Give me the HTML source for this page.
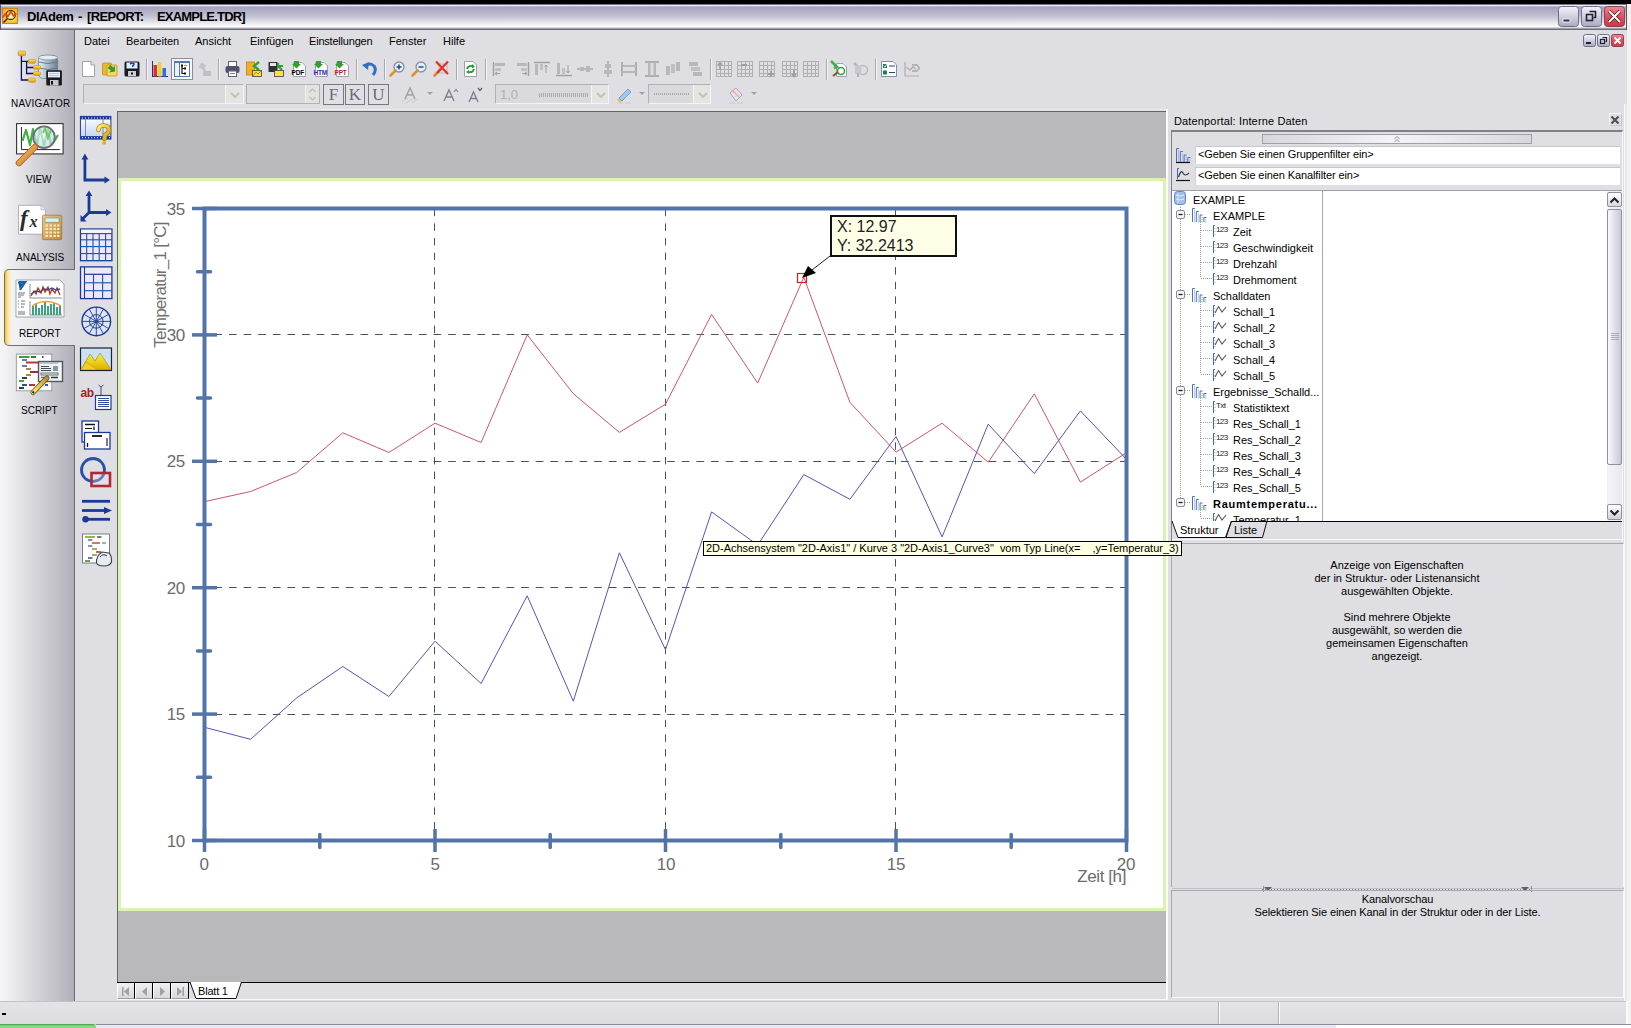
<!DOCTYPE html>
<html><head><meta charset="utf-8"><style>
*{box-sizing:border-box}
html,body{margin:0;padding:0}
body{width:1631px;height:1028px;position:relative;overflow:hidden;background:#dfdfe3;font-family:"Liberation Sans",sans-serif;font-size:11px;color:#000}
.a{position:absolute}
svg{position:absolute;overflow:visible}
#topblack{left:0;top:0;width:1631px;height:4px;background:#000}
#title{left:0;top:4px;width:1627px;height:26px;background:linear-gradient(#3a3a48 0px,#eee9ff 1.5px,#b8b4cc 2.5px,#a7a6c0 3.5px,#a9a8c2 5px,#c0c0d0 12px,#e8e8ee 19px,#f8f8fa 22px,#fff 22.5px,#d8d8dc 23.5px,#a0a0a8 24.5px,#6e6e78 25.5px);border-left:1px solid #6a4a8a;border-right:1px solid #555}
#rstrip{left:1627px;top:4px;width:4px;height:1024px;background:#f2f2f2}
#menu{left:0;top:29px;width:1627px;height:975px;background:#dfdfe3}
.mi{position:absolute;top:35px;font-size:11px;line-height:13px;white-space:nowrap}
#nav{left:0;top:30px;width:74px;height:971px;background:linear-gradient(90deg,#f6f6f8 0px,#e8e8ec 16px,#d4d3d9 37px,#c4c3ca 55px,#b2b1ba 73px);}
#navline{left:74px;top:30px;width:1px;height:971px;background:#6a6a6e}
#canvas{left:117px;top:111px;width:1049px;height:871px;background:#b9b9bb;border-left:1px solid #666;border-top:1px solid #666}
#page{left:118px;top:178px;width:1048px;height:733px;background:#fff;border:3px solid #d8f4b0}
#tabbar{left:117px;top:982px;width:1049px;height:17px;background:#dfdfe3;border-top:1px solid #000}
#status{left:0;top:1001px;width:1627px;height:23px;background:linear-gradient(#a0a0a8 0px,#e4e4e8 1px,#dcdce0 22px)}
#taskbar{left:0;top:1024px;width:1631px;height:4px;background:#e8e8f0}
</style></head>
<body>
<div id="topblack" class="a"></div>
<div id="menu" class="a"></div>
<div id="title" class="a"></div>
<div id="rstrip" class="a"></div>
<!-- title content -->
<svg class="a" style="left:2px;top:8px" width="16" height="16" viewBox="0 0 16 16">
<defs><radialGradient id="tg" cx="0.55" cy="0.5" r="0.7"><stop offset="0" stop-color="#fffce0"/><stop offset="0.5" stop-color="#f8d040"/><stop offset="1" stop-color="#f0a020"/></radialGradient></defs>
<rect x="0.5" y="0.5" width="15" height="15" fill="url(#tg)" stroke="#c88810"/>
<circle cx="8.7" cy="6.9" r="4.6" fill="none" stroke="#503010" stroke-width="1.3"/>
<path d="M0.8 9.5 L3.5 5.5 L6 8.5 L8.8 3.5 L11.5 8 L14.5 5.5" fill="none" stroke="#e04810" stroke-width="1.6" stroke-linejoin="round"/>
<path d="M5.5 10.5 L1.5 14.5" stroke="#402818" stroke-width="1.6"/>
</svg>
<div class="a" style="left:27px;top:9px;font-weight:bold;font-size:13px;line-height:16px;letter-spacing:-0.45px;white-space:nowrap">DIAdem</div>
<div class="a" style="left:78px;top:9px;font-weight:bold;font-size:13px;line-height:16px;white-space:nowrap">-</div>
<div class="a" style="left:87px;top:9px;font-weight:bold;font-size:13px;line-height:16px;letter-spacing:-0.6px;white-space:nowrap">[REPORT:</div>
<div class="a" style="left:157px;top:9px;font-weight:bold;font-size:13px;line-height:16px;letter-spacing:-0.8px;white-space:nowrap">EXAMPLE.TDR]</div>
<!-- window buttons -->
<svg class="a" style="left:1558px;top:6px" width="21" height="21" viewBox="0 0 21 21">
<defs><linearGradient id="bg1" x1="0" y1="0" x2="0" y2="1"><stop offset="0" stop-color="#f4f4fc"/><stop offset="0.5" stop-color="#d0d0e0"/><stop offset="1" stop-color="#a8a8c0"/></linearGradient>
<linearGradient id="bg2" x1="0" y1="0" x2="0" y2="1"><stop offset="0" stop-color="#f08890"/><stop offset="0.5" stop-color="#e05060"/><stop offset="1" stop-color="#c83848"/></linearGradient></defs>
<rect x="0.5" y="0.5" width="20" height="20" rx="3" fill="url(#bg1)" stroke="#707088"/>
<rect x="5" y="13" width="7" height="3" fill="#383850" stroke="#fff" stroke-width="0.8"/>
</svg>
<svg class="a" style="left:1581px;top:6px" width="21" height="21" viewBox="0 0 21 21">
<rect x="0.5" y="0.5" width="20" height="20" rx="3" fill="url(#bg1)" stroke="#707088"/>
<path d="M8.5 5.5 h6 v6 h-2" fill="none" stroke="#202030" stroke-width="1.6"/>
<rect x="5.5" y="8.5" width="6" height="6" fill="none" stroke="#202030" stroke-width="1.6"/>
</svg>
<svg class="a" style="left:1604px;top:6px" width="21" height="21" viewBox="0 0 21 21">
<rect x="0.5" y="0.5" width="20" height="20" rx="3" fill="url(#bg2)" stroke="#904050"/>
<path d="M5 5 L16 16 M16 5 L5 16" stroke="#401010" stroke-width="3.2"/>
<path d="M5 5 L16 16 M16 5 L5 16" stroke="#fff" stroke-width="2"/>
</svg>
<!-- menu -->
<div class="mi" style="left:84px">Datei</div>
<div class="mi" style="left:126px">Bearbeiten</div>
<div class="mi" style="left:195px">Ansicht</div>
<div class="mi" style="left:250px">Einfügen</div>
<div class="mi" style="left:309px;letter-spacing:-0.2px">Einstellungen</div>
<div class="mi" style="left:389px">Fenster</div>
<div class="mi" style="left:443px">Hilfe</div>
<!-- MDI buttons -->
<svg class="a" style="left:1583px;top:34px" width="13" height="13" viewBox="0 0 13 13">
<rect x="0.5" y="0.5" width="12" height="12" rx="2" fill="url(#bg1)" stroke="#707088"/>
<rect x="3" y="8" width="5" height="2" fill="#202030"/>
</svg>
<svg class="a" style="left:1597px;top:34px" width="13" height="13" viewBox="0 0 13 13">
<rect x="0.5" y="0.5" width="12" height="12" rx="2" fill="url(#bg1)" stroke="#707088"/>
<path d="M5.5 3.5 h4 v4 h-1" fill="none" stroke="#202030" stroke-width="1.2"/>
<rect x="3.5" y="5.5" width="4" height="4" fill="none" stroke="#202030" stroke-width="1.2"/>
</svg>
<svg class="a" style="left:1611px;top:34px" width="13" height="13" viewBox="0 0 13 13">
<rect x="0.5" y="0.5" width="12" height="12" rx="2" fill="url(#bg2)" stroke="#904050"/>
<path d="M3.5 3.5 L9.5 9.5 M9.5 3.5 L3.5 9.5" stroke="#fff" stroke-width="1.8"/>
</svg>

<div id="nav" class="a"></div>
<div id="navline" class="a"></div>

<style>
.nl{position:absolute;font-size:10px;line-height:12px;white-space:nowrap;color:#000}
</style>
<!-- selected report tab -->
<div class="a" style="left:4px;top:269px;width:71px;height:77px;background:linear-gradient(90deg,#f0c040 0px,#f8e8a0 3px,#f4f4f6 7px,#ececf0 20px,#dfdfe3 70px);border-top:1px solid #707074;border-bottom:1px solid #707074;border-left:1px solid #807050;border-radius:5px 0 0 5px"></div>
<div class="a" style="left:74px;top:270px;width:1px;height:75px;background:#dfdfe3"></div>
<!-- NAVIGATOR icon -->
<svg style="left:10px;top:45px" width="60" height="45" viewBox="0 0 60 45">
<defs>
<linearGradient id="ny" x1="0" y1="0" x2="0" y2="1"><stop offset="0" stop-color="#ffe070"/><stop offset="1" stop-color="#d8a010"/></linearGradient>
<linearGradient id="ndb" x1="0" y1="0" x2="1" y2="0"><stop offset="0" stop-color="#e8f0f4"/><stop offset="0.5" stop-color="#a8b8c8"/><stop offset="1" stop-color="#708090"/></linearGradient>
</defs>
<path d="M11.4 10.7 V35 H18.4 M11.4 16.4 H18.4 M16.6 16.4 V28.5 H23.6 M16.6 22.5 H23.6" fill="none" stroke="#101060" stroke-width="1.3"/>
<rect x="28.4" y="10.5" width="19.3" height="23" rx="5" fill="url(#ndb)" stroke="#708090" stroke-width="0.8"/>
<path d="M28.6 17 Q38 20 47.5 17 M28.6 23 Q38 26 47.5 23" fill="none" stroke="#607080" stroke-width="0.9"/>
<ellipse cx="38" cy="12.5" rx="9.5" ry="2.5" fill="#e0ecf0" stroke="#708090" stroke-width="0.7"/>
<rect x="8.1" y="6.1" width="7.4" height="4.6" rx="1" fill="url(#ny)" stroke="#c89000" stroke-width="0.6"/>
<rect x="18.4" y="14.4" width="7" height="3.8" rx="1" fill="url(#ny)" stroke="#c89000" stroke-width="0.6"/>
<rect x="23.6" y="20.6" width="7" height="3.7" rx="1" fill="url(#ny)" stroke="#c89000" stroke-width="0.6"/>
<rect x="23.6" y="26.7" width="7" height="3.7" rx="1" fill="url(#ny)" stroke="#c89000" stroke-width="0.6"/>
<rect x="18.4" y="33.3" width="7" height="3.9" rx="1" fill="url(#ny)" stroke="#c89000" stroke-width="0.6"/>
<rect x="36.3" y="25.2" width="15.6" height="15.3" rx="1.2" fill="#1a1a1e"/>
<rect x="38" y="26.8" width="12" height="5.6" fill="#e8f4fc"/>
<line x1="39" y1="28.5" x2="49" y2="28.5" stroke="#90a8c0" stroke-width="0.6"/>
<line x1="39" y1="30.5" x2="49" y2="30.5" stroke="#90a8c0" stroke-width="0.6"/>
<rect x="40" y="35" width="8.5" height="5.5" fill="#c8c8cc"/>
<rect x="41" y="36" width="2" height="3.5" fill="#111"/>
</svg>
<div class="nl" style="left:11px;top:98px;letter-spacing:0.25px">NAVIGATOR</div>
<!-- VIEW icon -->
<svg style="left:10px;top:118px" width="60" height="52" viewBox="0 0 60 52">
<defs><radialGradient id="lens" cx="0.45" cy="0.4" r="0.6"><stop offset="0" stop-color="#f4fcff"/><stop offset="1" stop-color="#b8d8e0"/></radialGradient>
<linearGradient id="hdl" x1="0" y1="0" x2="1" y2="1"><stop offset="0" stop-color="#f8c070"/><stop offset="1" stop-color="#c87828"/></linearGradient></defs>
<rect x="6.6" y="5.6" width="46.5" height="30.3" fill="#fff" stroke="#333" stroke-width="1.1"/>
<path d="M11.4 9 V31.6 H49.8" fill="none" stroke="#223" stroke-width="1"/>
<path d="M12.5 23 L16 12 L20 27 L23 11 L27 27 L30 10 L34 27 L38 11 L41 27 L45 22 L48 17" fill="none" stroke="#40b040" stroke-width="2.2" stroke-linejoin="round"/>
<circle cx="34" cy="19.2" r="10.8" fill="url(#lens)" fill-opacity="0.7" stroke="#687078" stroke-width="1.8"/>
<path d="M33 15 L35 10 L38 20 L41 12" fill="none" stroke="#50c050" stroke-width="2" opacity="0.8"/>
<line x1="25" y1="29" x2="9" y2="45" stroke="#b06820" stroke-width="6.5" stroke-linecap="round"/>
<line x1="25" y1="29" x2="9" y2="45" stroke="url(#hdl)" stroke-width="4.6" stroke-linecap="round"/>
</svg>
<div class="nl" style="left:26px;top:174px">VIEW</div>
<!-- ANALYSIS icon -->
<svg style="left:10px;top:198px" width="60" height="48" viewBox="0 0 60 48">
<defs><linearGradient id="calc" x1="0" y1="0" x2="1" y2="1"><stop offset="0" stop-color="#f0c890"/><stop offset="1" stop-color="#b88840"/></linearGradient></defs>
<path d="M8.5 7.3 H31 L35.5 11.8 V36.2 H8.5 Z" fill="#fff" stroke="#a0a0a8" stroke-width="0.8"/>
<path d="M31 7.3 V11.8 H35.5" fill="#e8eef4" stroke="#a0a0a8" stroke-width="0.6"/>
<text x="10" y="28" font-family="Liberation Serif" font-style="italic" font-weight="bold" font-size="23" fill="#2a2a2a">f</text>
<text x="19.5" y="29" font-family="Liberation Serif" font-style="italic" font-weight="bold" font-size="16" fill="#2a2a2a">x</text>
<rect x="32.4" y="17.2" width="19.3" height="24.5" rx="1.2" fill="url(#calc)" stroke="#987030" stroke-width="0.7"/>
<rect x="35" y="20" width="14" height="4.2" fill="#c8f4fc" stroke="#907040" stroke-width="0.5"/>
<g fill="#f8e8b0">
<rect x="35.5" y="26.5" width="2.5" height="2"/><rect x="39.5" y="26.5" width="2.5" height="2"/><rect x="43.5" y="26.5" width="2.5" height="2"/><rect x="47" y="26.5" width="2.5" height="2"/>
<rect x="35.5" y="30" width="2.5" height="2"/><rect x="39.5" y="30" width="2.5" height="2"/><rect x="43.5" y="30" width="2.5" height="2"/><rect x="47" y="30" width="2.5" height="2"/>
<rect x="35.5" y="33.5" width="2.5" height="2"/><rect x="39.5" y="33.5" width="2.5" height="2"/><rect x="43.5" y="33.5" width="2.5" height="2"/><rect x="47" y="33.5" width="2.5" height="2"/>
<rect x="35.5" y="37" width="2.5" height="2"/><rect x="39.5" y="37" width="2.5" height="2"/><rect x="43.5" y="37" width="2.5" height="2"/><rect x="47" y="37" width="2.5" height="2"/>
</g>
</svg>
<div class="nl" style="left:16px;top:252px">ANALYSIS</div>
<!-- REPORT icon -->
<svg style="left:10px;top:275px" width="60" height="46" viewBox="0 0 60 46">
<path d="M6 5 H50 L54 9 V42 H6 Z" fill="#fff" stroke="#8890a0" stroke-width="0.8"/>
<path d="M8 7 L13 7 L11 9 L14 8 L11 12 L10 15 L9 11 Z" fill="#1858a0"/>
<path d="M8.5 7 L15 7 L12 10 L14 9 L10 15" fill="none" stroke="#1860a8" stroke-width="2"/>
<g stroke="#405060" stroke-width="0.8"><line x1="8" y1="18" x2="15" y2="18"/><line x1="8" y1="20" x2="14" y2="20"/><line x1="8" y1="22" x2="11" y2="22"/>
<line x1="8" y1="26" x2="9" y2="26"/><line x1="11" y1="26" x2="15" y2="26"/><line x1="8" y1="29" x2="9" y2="29"/><line x1="11" y1="29" x2="15" y2="29"/><line x1="8" y1="32" x2="9" y2="32"/><line x1="11" y1="32" x2="14" y2="32"/>
<line x1="8" y1="37" x2="15" y2="37"/><line x1="8" y1="39" x2="15" y2="39"/></g>
<path d="M20 9 V23 H52 M20 26 V40 H52" fill="none" stroke="#606060" stroke-width="0.7"/>
<path d="M21 21 L24 16 L26 19 L28 13 L31 18 L33 12 L35 17 L38 12 L40 19 L42 14 L45 18 L47 13 L50 20" fill="none" stroke="#c03020" stroke-width="1.3"/>
<path d="M21 19 L26 16 L30 17 L34 14 L38 15 L42 13 L46 15 L50 14" fill="none" stroke="#2050a0" stroke-width="1.3"/>
<g fill="#40a080"><rect x="22" y="31" width="2" height="9"/><rect x="25" y="28" width="2" height="12"/><rect x="28" y="33" width="2" height="7"/><rect x="31" y="30" width="2" height="10"/><rect x="34" y="27" width="2" height="13"/><rect x="37" y="31" width="2" height="9"/><rect x="40" y="29" width="2" height="11"/><rect x="43" y="28" width="2" height="12"/><rect x="46" y="32" width="2" height="8"/><rect x="49" y="30" width="2" height="10"/></g>
<path d="M22 31 Q36 22 51 31" fill="none" stroke="#f0a040" stroke-width="1.3"/>
</svg>
<div class="nl" style="left:19px;top:328px">REPORT</div>
<!-- SCRIPT icon -->
<svg style="left:10px;top:348px" width="60" height="50" viewBox="0 0 60 50">
<defs><linearGradient id="pen" x1="0" y1="0" x2="1" y2="0"><stop offset="0" stop-color="#fff080"/><stop offset="1" stop-color="#c89810"/></linearGradient></defs>
<rect x="6.3" y="6.1" width="35.5" height="36.7" fill="#fff" stroke="#888890" stroke-width="0.8"/>
<g stroke-width="2">
<line x1="9" y1="9" x2="19.5" y2="9" stroke="#40a040"/><line x1="21" y1="9" x2="26" y2="9" stroke="#308030"/><line x1="32" y1="9" x2="33.5" y2="9" stroke="#405060"/>
<line x1="12" y1="12" x2="17" y2="12" stroke="#6080b0"/>
<line x1="16" y1="14.5" x2="30" y2="14.5" stroke="#c03040"/>
<line x1="12" y1="18" x2="17" y2="18" stroke="#6080b0"/>
<line x1="16" y1="21" x2="21" y2="21" stroke="#a09040"/>
<line x1="20" y1="24" x2="29" y2="24" stroke="#903040"/>
<line x1="16" y1="27" x2="21" y2="27" stroke="#a09040"/>
<line x1="12" y1="30" x2="17" y2="30" stroke="#304050"/>
<line x1="9" y1="33" x2="14" y2="33" stroke="#50a040"/>
<line x1="12" y1="37" x2="17" y2="37" stroke="#206070"/><line x1="19" y1="37" x2="25" y2="37" stroke="#c03030"/><line x1="35" y1="37" x2="38" y2="37" stroke="#2060b0"/>
<line x1="9" y1="40" x2="14" y2="40" stroke="#304040"/>
</g>
<rect x="28.5" y="13.5" width="24" height="20" fill="#f0f4f8" stroke="#505860" stroke-width="1.4"/>
<line x1="29" y1="15" x2="48" y2="15" stroke="#90a8b0" stroke-width="1.2"/>
<g stroke="#303840" stroke-width="0.9"><line x1="31" y1="18.5" x2="39" y2="18.5"/><line x1="31" y1="20.5" x2="41" y2="20.5"/><line x1="31" y1="22.5" x2="41" y2="22.5"/></g>
<rect x="43" y="18" width="5" height="5" fill="#8898a0"/>
<rect x="31" y="25" width="17" height="2" fill="none" stroke="#405050" stroke-width="0.8"/>
<line x1="31" y1="29.5" x2="36" y2="29.5" stroke="#5070a0" stroke-width="1.5"/><line x1="41" y1="29.5" x2="48" y2="29.5" stroke="#303840" stroke-width="1.5"/>
<line x1="23" y1="44.5" x2="37" y2="30" stroke="#605010" stroke-width="5" stroke-linecap="round"/>
<line x1="23" y1="44.5" x2="37" y2="30" stroke="url(#pen)" stroke-width="3.4" stroke-linecap="round"/>
<line x1="35" y1="32" x2="37.5" y2="29.5" stroke="#c08070" stroke-width="3"/>
<line x1="22.5" y1="45" x2="24" y2="43.5" stroke="#222" stroke-width="2"/>
</svg>
<div class="nl" style="left:21px;top:405px">SCRIPT</div>

<svg style="left:81px;top:61px" width="16" height="16" viewBox="0 0 16 16"><path d="M1.5 0.5 H10 L13.5 4 V15.5 H1.5 Z" fill="#fff" stroke="#a0a0a8"/><path d="M10 0.5 V4 H13.5" fill="#e8e8f0" stroke="#a0a0a8"/></svg>
<svg style="left:102px;top:61px" width="16" height="16" viewBox="0 0 16 16"><rect x="0.5" y="2" width="9" height="12" rx="1" fill="#e8b830" stroke="#c09020" stroke-width="0.8"/><rect x="5" y="4" width="10" height="11" rx="1" fill="#f8d860" stroke="#c09020" stroke-width="0.8"/><path d="M6 6 L10 6 L10 3.5 L14 8 L10 12.5 L10 10 L6 10 Z" fill="#30a030" transform="rotate(40 10 8)"/></svg>
<svg style="left:124px;top:61px" width="16" height="16" viewBox="0 0 16 16"><rect x="0.5" y="0.5" width="15" height="15" rx="1.5" fill="#1a1a20"/><rect x="2.5" y="1.5" width="11" height="6" fill="#e0f0ff"/><path d="M6 3 Q8 1.5 10 3 Q10 5 8 5.5" fill="none" stroke="#2040b0" stroke-width="1.6"/><rect x="4" y="10" width="8" height="5" fill="#c8d0e0"/><rect x="7" y="11.5" width="2" height="2" fill="#111"/></svg>
<div class="a" style="left:146px;top:59px;width:1px;height:21px;background:#a8a8b0;box-shadow:1px 0 0 #f4f4f8"></div>
<svg style="left:152px;top:61px" width="16" height="16" viewBox="0 0 16 16"><line x1="0.5" y1="0" x2="0.5" y2="16" stroke="#203080"/><line x1="0" y1="15.5" x2="16" y2="15.5" stroke="#203080"/><rect x="1.5" y="4" width="3.5" height="11.5" fill="#e03020"/><rect x="6" y="1" width="3.5" height="14.5" fill="#f0d030"/><rect x="10.5" y="7" width="3.5" height="8.5" fill="#3070d0"/></svg>
<div class="a" style="left:171px;top:58px;width:22px;height:22px;border:1px solid #8c8c94;background:#f4f6fc"></div>
<svg style="left:174px;top:61px" width="16" height="16" viewBox="0 0 16 16"><rect x="0.5" y="0.5" width="15" height="15" fill="#fff" stroke="#5878a8"/><rect x="1" y="1" width="4.5" height="14" fill="#f0f4f0"/><line x1="5.5" y1="1" x2="5.5" y2="15" stroke="#5878a8"/><line x1="1" y1="1.5" x2="15" y2="1.5" stroke="#5878a8" stroke-width="1.2"/><path d="M8 4 V12.5 H10.5 M8 7.5 H10.5" fill="none" stroke="#111" stroke-width="1.2"/><rect x="7" y="3.5" width="2" height="2" fill="#111"/><rect x="10" y="6.5" width="2" height="2" fill="#111"/><rect x="10" y="11.5" width="2" height="2" fill="#111"/><line x1="10" y1="4.5" x2="13.5" y2="4.5" stroke="#8090a0" stroke-width="0.8"/></svg>
<svg style="left:196px;top:61px" width="16" height="16" viewBox="0 0 16 16"><path d="M5 1.5 L10 4 L8 9 L3 6.5 Z" fill="#c4c4c8"/><path d="M7 7 L10 12" stroke="#c0c0c4" stroke-width="2"/><rect x="7" y="10" width="8" height="5" fill="#c0c0c4"/></svg>
<div class="a" style="left:218px;top:59px;width:1px;height:21px;background:#a8a8b0;box-shadow:1px 0 0 #f4f4f8"></div>
<svg style="left:225px;top:61px" width="16" height="16" viewBox="0 0 16 16"><rect x="3.5" y="0.5" width="8" height="5" fill="#fff" stroke="#606070"/><rect x="0.5" y="5" width="14" height="7" rx="2" fill="#505070"/><rect x="3.5" y="10" width="8" height="5.5" fill="#fff" stroke="#606070"/><line x1="5" y1="12.5" x2="10" y2="12.5" stroke="#808090"/></svg>
<svg style="left:246px;top:61px" width="16" height="16" viewBox="0 0 16 16"><rect x="0.5" y="1" width="8" height="13" fill="#f0b020" stroke="#c08010" stroke-width="0.8"/><path d="M13 1 L8 5 L13 9" fill="none" stroke="#30a030" stroke-width="2.4"/><rect x="6.5" y="9.5" width="9" height="6" fill="#f8e040" stroke="#404040" stroke-width="0.8"/><path d="M7 15 L10 11 L12 13 L15 10" fill="none" stroke="#a08000" stroke-width="0.8"/></svg>
<svg style="left:268px;top:61px" width="16" height="16" viewBox="0 0 16 16"><rect x="0.5" y="1" width="9" height="10" fill="#303038"/><rect x="2" y="2" width="6" height="3" fill="#e0e8f0"/><path d="M15 5 L10 5 L10 2 M10 5 L14 9" fill="none" stroke="#30a030" stroke-width="2.2"/><rect x="6.5" y="9.5" width="9" height="6" fill="#f8e040" stroke="#404040" stroke-width="0.8"/></svg>
<svg style="left:291px;top:61px" width="16" height="16" viewBox="0 0 16 16"><path d="M2.5 1.5 H11 L14.5 5 V15.5 H2.5 Z" fill="#fff" stroke="#a0a0b0"/><path d="M1 0 L6 0 L6 3 L8 3 L3.5 7.5 L-1 3 L1 3 Z" fill="#30a030" transform="translate(2,0)"/><text x="0.5" y="14" font-family="Liberation Sans" font-weight="bold" font-size="6.5" fill="#000" letter-spacing="-0.2">PDF</text></svg>
<svg style="left:313px;top:61px" width="16" height="16" viewBox="0 0 16 16"><path d="M2.5 1.5 H11 L14.5 5 V15.5 H2.5 Z" fill="#fff" stroke="#a0a0b0"/><path d="M1 0 L6 0 L6 3 L8 3 L3.5 7.5 L-1 3 L1 3 Z" fill="#30a030" transform="translate(2,0)"/><text x="0.5" y="14" font-family="Liberation Sans" font-weight="bold" font-size="6.5" fill="#2030c0" letter-spacing="-0.2">HTM</text></svg>
<svg style="left:334px;top:61px" width="16" height="16" viewBox="0 0 16 16"><path d="M2.5 1.5 H11 L14.5 5 V15.5 H2.5 Z" fill="#fff" stroke="#a0a0b0"/><path d="M1 0 L6 0 L6 3 L8 3 L3.5 7.5 L-1 3 L1 3 Z" fill="#30a030" transform="translate(2,0)"/><text x="0.5" y="14" font-family="Liberation Sans" font-weight="bold" font-size="6.5" fill="#c02030" letter-spacing="-0.2">PPT</text></svg>
<div class="a" style="left:356px;top:59px;width:1px;height:21px;background:#a8a8b0;box-shadow:1px 0 0 #f4f4f8"></div>
<svg style="left:362px;top:61px" width="16" height="16" viewBox="0 0 16 16"><path d="M4 5 Q8 1 12 5 Q15 9 11 14" fill="none" stroke="#3070c0" stroke-width="3"/><polygon points="0,4 7,1 6,9" fill="#3070c0"/></svg>
<div class="a" style="left:384px;top:59px;width:1px;height:21px;background:#a8a8b0;box-shadow:1px 0 0 #f4f4f8"></div>
<svg style="left:389px;top:61px" width="16" height="16" viewBox="0 0 16 16"><circle cx="10" cy="6" r="5" fill="#e0f0fc" stroke="#8090a8" stroke-width="1.3"/><line x1="6.5" y1="9.5" x2="1.5" y2="14.5" stroke="#e09030" stroke-width="2.6" stroke-linecap="round"/><path d="M7.5 6 H12.5 M10 3.5 V8.5" stroke="#204080" stroke-width="1.4"/></svg>
<svg style="left:411px;top:61px" width="16" height="16" viewBox="0 0 16 16"><circle cx="10" cy="6" r="5" fill="#e0f0fc" stroke="#8090a8" stroke-width="1.3"/><line x1="6.5" y1="9.5" x2="1.5" y2="14.5" stroke="#e09030" stroke-width="2.6" stroke-linecap="round"/><path d="M7.5 6 H12.5" stroke="#204080" stroke-width="1.4"/></svg>
<svg style="left:433px;top:61px" width="16" height="16" viewBox="0 0 16 16"><rect x="6" y="3" width="8" height="9" fill="none" stroke="#a0b0c8" stroke-width="0.8"/><line x1="7" y1="9" x2="1.5" y2="14.5" stroke="#e08030" stroke-width="2.6" stroke-linecap="round"/><path d="M3 0.5 L15 13 M15 0.5 L4 12" stroke="#e83020" stroke-width="2.2"/></svg>
<div class="a" style="left:456px;top:59px;width:1px;height:21px;background:#a8a8b0;box-shadow:1px 0 0 #f4f4f8"></div>
<svg style="left:463px;top:61px" width="16" height="16" viewBox="0 0 16 16"><path d="M1.5 0.5 H10 L13.5 4 V15.5 H1.5 Z" fill="#fff" stroke="#a0a0a8"/><path d="M4 8 Q5 4 10 5 M11 8 Q10 12 5 11" fill="none" stroke="#20a030" stroke-width="1.8"/><polygon points="9,3 12,5.5 9,7.5" fill="#20a030"/><polygon points="6,9 3,11 6,13" fill="#20a030"/></svg>
<div class="a" style="left:485px;top:59px;width:1px;height:21px;background:#a8a8b0;box-shadow:1px 0 0 #f4f4f8"></div>
<svg style="left:492px;top:61px" width="16" height="16" viewBox="0 0 16 16"><line x1="1.5" y1="1" x2="1.5" y2="15" stroke="#a0a0a4" stroke-width="1.5"/><rect x="3" y="2" width="10" height="3" fill="#b8b8bc"/><rect x="3" y="7" width="6" height="3" fill="#c0c0c4"/><path d="M3 12.5 H8 M3 12.5 L5 11 M3 12.5 L5 14" stroke="#a0a0a4"/></svg>
<svg style="left:514px;top:61px" width="16" height="16" viewBox="0 0 16 16"><line x1="14.5" y1="1" x2="14.5" y2="15" stroke="#a0a0a4" stroke-width="1.5"/><rect x="3" y="2" width="10" height="3" fill="#b8b8bc"/><rect x="7" y="7" width="6" height="3" fill="#c0c0c4"/><path d="M8 12.5 H13 M13 12.5 L11 11 M13 12.5 L11 14" stroke="#a0a0a4"/></svg>
<svg style="left:534px;top:61px" width="16" height="16" viewBox="0 0 16 16"><line x1="0" y1="1.5" x2="16" y2="1.5" stroke="#a0a0a4" stroke-width="1.5"/><rect x="1" y="3" width="3" height="11" fill="#b8b8bc"/><rect x="6" y="3" width="3" height="6" fill="#c0c0c4"/><path d="M12 4 V12 M12 4 L10.5 6 M12 4 L13.5 6" stroke="#a0a0a4"/></svg>
<svg style="left:556px;top:61px" width="16" height="16" viewBox="0 0 16 16"><line x1="0" y1="14.5" x2="16" y2="14.5" stroke="#a0a0a4" stroke-width="1.5"/><rect x="1" y="2" width="3" height="11" fill="#b8b8bc"/><rect x="6" y="7" width="3" height="6" fill="#c0c0c4"/><path d="M12 4 V12 M12 12 L10.5 10 M12 12 L13.5 10" stroke="#a0a0a4"/></svg>
<svg style="left:577px;top:61px" width="16" height="16" viewBox="0 0 16 16"><line x1="0" y1="8" x2="16" y2="8" stroke="#a8a8ac" stroke-width="1.5"/><rect x="3" y="6" width="4" height="4" fill="#b8b8bc"/><rect x="9" y="5" width="4" height="6" fill="#b8b8bc"/></svg>
<svg style="left:600px;top:61px" width="16" height="16" viewBox="0 0 16 16"><line x1="8" y1="0" x2="8" y2="16" stroke="#a8a8ac" stroke-width="1.5"/><rect x="5" y="3" width="6" height="4" fill="#b8b8bc"/><rect x="4" y="9" width="8" height="4" fill="#b8b8bc"/></svg>
<svg style="left:621px;top:61px" width="16" height="16" viewBox="0 0 16 16"><line x1="1" y1="1" x2="1" y2="15" stroke="#a0a0a4" stroke-width="1.6"/><line x1="15" y1="1" x2="15" y2="15" stroke="#a0a0a4" stroke-width="1.6"/><rect x="1" y="4" width="14" height="2" fill="#b8b8bc"/><rect x="1" y="10" width="14" height="2" fill="#b8b8bc"/></svg>
<svg style="left:644px;top:61px" width="16" height="16" viewBox="0 0 16 16"><line x1="1" y1="1" x2="15" y2="1" stroke="#a0a0a4" stroke-width="1.6"/><line x1="1" y1="15" x2="15" y2="15" stroke="#a0a0a4" stroke-width="1.6"/><rect x="4" y="1" width="2.5" height="14" fill="#b8b8bc"/><rect x="9.5" y="1" width="2.5" height="14" fill="#b8b8bc"/></svg>
<svg style="left:665px;top:61px" width="16" height="16" viewBox="0 0 16 16"><rect x="1" y="5" width="4" height="9" fill="#b8b8bc"/><rect x="6" y="3" width="4" height="9" fill="#c0c0c4"/><rect x="11" y="1" width="4" height="9" fill="#b8b8bc"/></svg>
<svg style="left:688px;top:61px" width="16" height="16" viewBox="0 0 16 16"><rect x="1" y="1" width="9" height="4" fill="#b8b8bc"/><rect x="3" y="6" width="9" height="4" fill="#c0c0c4"/><rect x="5" y="11" width="9" height="4" fill="#b8b8bc"/></svg>
<div class="a" style="left:710px;top:59px;width:1px;height:21px;background:#a8a8b0;box-shadow:1px 0 0 #f4f4f8"></div>
<svg style="left:716px;top:61px" width="16" height="16" viewBox="0 0 16 16"><g stroke="#b0b0b4" stroke-width="1"><rect x="0.5" y="0.5" width="15" height="15" fill="none"/><line x1="0" y1="4.5" x2="16" y2="4.5"/><line x1="0" y1="8.5" x2="16" y2="8.5"/><line x1="0" y1="12.5" x2="16" y2="12.5"/><line x1="4.5" y1="0" x2="4.5" y2="16"/><line x1="8.5" y1="0" x2="8.5" y2="16"/><line x1="12.5" y1="0" x2="12.5" y2="16"/></g><path d="M4 9 V2 M2 4 L4 1.5 L6 4" stroke="#a0a0a4" stroke-width="1.6" fill="none"/></svg>
<svg style="left:737px;top:61px" width="16" height="16" viewBox="0 0 16 16"><g stroke="#b0b0b4" stroke-width="1"><rect x="0.5" y="0.5" width="15" height="15" fill="none"/><line x1="0" y1="4.5" x2="16" y2="4.5"/><line x1="0" y1="8.5" x2="16" y2="8.5"/><line x1="0" y1="12.5" x2="16" y2="12.5"/><line x1="4.5" y1="0" x2="4.5" y2="16"/><line x1="8.5" y1="0" x2="8.5" y2="16"/><line x1="12.5" y1="0" x2="12.5" y2="16"/></g><rect x="4" y="3" width="6" height="2" fill="#a0a0a4"/></svg>
<svg style="left:759px;top:61px" width="16" height="16" viewBox="0 0 16 16"><g stroke="#b0b0b4" stroke-width="1"><rect x="0.5" y="0.5" width="15" height="15" fill="none"/><line x1="0" y1="4.5" x2="16" y2="4.5"/><line x1="0" y1="8.5" x2="16" y2="8.5"/><line x1="0" y1="12.5" x2="16" y2="12.5"/><line x1="4.5" y1="0" x2="4.5" y2="16"/><line x1="8.5" y1="0" x2="8.5" y2="16"/><line x1="12.5" y1="0" x2="12.5" y2="16"/></g><path d="M12 10 V16 M9 13 H15" stroke="#a0a0a4" stroke-width="2"/></svg>
<svg style="left:782px;top:61px" width="16" height="16" viewBox="0 0 16 16"><g stroke="#b0b0b4" stroke-width="1"><rect x="0.5" y="0.5" width="15" height="15" fill="none"/><line x1="0" y1="4.5" x2="16" y2="4.5"/><line x1="0" y1="8.5" x2="16" y2="8.5"/><line x1="0" y1="12.5" x2="16" y2="12.5"/><line x1="4.5" y1="0" x2="4.5" y2="16"/><line x1="8.5" y1="0" x2="8.5" y2="16"/><line x1="12.5" y1="0" x2="12.5" y2="16"/></g><path d="M12 8 V15 M10 13 L12 15.5 L14 13" stroke="#a0a0a4" stroke-width="1.6" fill="none"/></svg>
<svg style="left:803px;top:61px" width="16" height="16" viewBox="0 0 16 16"><g stroke="#b0b0b4" stroke-width="1"><rect x="0.5" y="0.5" width="15" height="15" fill="none"/><line x1="0" y1="4.5" x2="16" y2="4.5"/><line x1="0" y1="8.5" x2="16" y2="8.5"/><line x1="0" y1="12.5" x2="16" y2="12.5"/><line x1="4.5" y1="0" x2="4.5" y2="16"/><line x1="8.5" y1="0" x2="8.5" y2="16"/><line x1="12.5" y1="0" x2="12.5" y2="16"/></g></svg>
<div class="a" style="left:826px;top:59px;width:1px;height:21px;background:#a8a8b0;box-shadow:1px 0 0 #f4f4f8"></div>
<svg style="left:831px;top:61px" width="16" height="16" viewBox="0 0 16 16"><path d="M5.5 2.5 H12 L15.5 6 V15.5 H5.5 Z" fill="#fff" stroke="#a0a0b0"/><circle cx="10" cy="10" r="3.5" fill="none" stroke="#30a040" stroke-width="1.5"/><path d="M0 0 L6 6 L3 7" fill="none" stroke="#40b040" stroke-width="2.5"/><line x1="7" y1="11" x2="2" y2="15" stroke="#806020" stroke-width="2.2"/></svg>
<svg style="left:852px;top:61px" width="16" height="16" viewBox="0 0 16 16"><path d="M2 2 L9 9" stroke="#b8b8bc" stroke-width="2.5"/><circle cx="11" cy="9" r="4.5" fill="none" stroke="#b8b8bc" stroke-width="1.5"/><rect x="3" y="5" width="6" height="8" fill="#c8c8cc"/><line x1="6" y1="12" x2="6" y2="16" stroke="#b0b0b4" stroke-width="2"/></svg>
<div class="a" style="left:875px;top:59px;width:1px;height:21px;background:#a8a8b0;box-shadow:1px 0 0 #f4f4f8"></div>
<svg style="left:881px;top:61px" width="16" height="16" viewBox="0 0 16 16"><path d="M0.5 0.5 H12 L15.5 4 V15.5 H0.5 Z" fill="#fff" stroke="#8090a0"/><rect x="2" y="3" width="4" height="4" fill="#208050"/><rect x="2" y="9.5" width="4" height="4" fill="#208050"/><path d="M8 5 H14 M8 11.5 H14" stroke="#204080" stroke-width="1.2"/><path d="M2.8 5 L4 6.2 L6 3" stroke="#fff" stroke-width="0.8" fill="none"/></svg>
<svg style="left:904px;top:61px" width="16" height="16" viewBox="0 0 16 16"><path d="M1 1 V15 H15" fill="none" stroke="#b0b0b4" stroke-width="1.2"/><path d="M2 6 L6 9 L9 6 L12 8" fill="none" stroke="#b0b0b4" stroke-width="1.5"/><path d="M8 4 H13 L15.5 7 L13 10 H8" fill="none" stroke="#a8a8ac" stroke-width="1.3"/></svg>
<div class="a" style="left:83px;top:84px;width:161px;height:20px;border:1px solid;border-color:#b0b0b8 #f4f4f6 #f4f4f6 #b0b0b8;background:#dadade"></div><div class="a" style="left:225px;top:85px;width:18px;height:18px;background:#e4e4e0;border-left:1px solid #f4f4f4"></div><svg style="left:229px;top:89px" width="12" height="12" viewBox="0 0 12 12"><path d="M2 4 L6 8 L10 4" fill="none" stroke="#c0c0bc" stroke-width="1.8"/></svg>

<div class="a" style="left:246px;top:84px;width:74px;height:20px;border:1px solid #b0b0b8;background:#dadade"></div>
<div class="a" style="left:305px;top:85px;width:14px;height:18px;background:#e2e2de;border-left:1px solid #f0f0f0"></div>
<svg style="left:307px;top:86px" width="11" height="17" viewBox="0 0 11 17"><path d="M2.5 6 L5.5 3 L8.5 6 M2.5 11 L5.5 14 L8.5 11" fill="none" stroke="#c0c0bc" stroke-width="1.3"/></svg>
<div class="a" style="left:323px;top:84px;width:21px;height:21px;border:1px solid #787880;background:#e0e0e4"></div><div class="a" style="left:323px;top:86px;width:21px;text-align:center;font-family:'Liberation Serif',serif;font-size:17px;line-height:17px;color:#6a6a78">F</div>
<div class="a" style="left:345px;top:84px;width:20px;height:21px;border:1px solid #787880;background:#e0e0e4"></div><div class="a" style="left:345px;top:86px;width:20px;text-align:center;font-family:'Liberation Serif',serif;font-size:17px;line-height:17px;color:#6a6a78">K</div>
<div class="a" style="left:368px;top:84px;width:21px;height:21px;border:1px solid #787880;background:#e0e0e4"></div><div class="a" style="left:368px;top:86px;width:21px;text-align:center;font-family:'Liberation Serif',serif;font-size:17px;line-height:17px;color:#6a6a78">U</div>
<svg style="left:402px;top:86px" width="18" height="18" viewBox="0 0 18 18"><path d="M3 13 L8 2 L13 13 M5 9 H11" fill="none" stroke="#a0a0a8" stroke-width="1.5"/><path d="M0 16 L6 12 M4 17 L12 12 M10 17 L16 13" stroke="#c8c8d0" stroke-width="1"/></svg>
<svg style="left:427px;top:92px" width="6" height="4" viewBox="0 0 6 4"><polygon points="0,0 6,0 3,3" fill="#a0a0a8"/></svg>
<svg style="left:443px;top:86px" width="16" height="17" viewBox="0 0 16 17"><path d="M1 15 L6 4 L11 15 M3 11 H9" fill="none" stroke="#808090" stroke-width="1.4"/><path d="M11 6 L13 3.5 L15 6" fill="none" stroke="#808090" stroke-width="1.1"/></svg>
<svg style="left:468px;top:86px" width="16" height="17" viewBox="0 0 16 17"><path d="M1 16 L5.5 6 L10 16 M2.8 12.5 H8.2" fill="none" stroke="#808090" stroke-width="1.4"/><path d="M10 2 L12 4.5 L14 2" fill="none" stroke="#606070" stroke-width="1.3"/></svg>
<div class="a" style="left:495px;top:84px;width:114px;height:20px;border:1px solid;border-color:#b0b0b8 #f4f4f6 #f4f4f6 #b0b0b8;background:#dadade"></div><div class="a" style="left:591px;top:85px;width:17px;height:18px;background:#e4e4e0;border-left:1px solid #f4f4f4"></div><svg style="left:595px;top:89px" width="12" height="12" viewBox="0 0 12 12"><path d="M2 4 L6 8 L10 4" fill="none" stroke="#c0c0bc" stroke-width="1.8"/></svg>

<div class="a" style="left:500px;top:87px;font-size:13px;line-height:15px;color:#b0b0b4">1,0</div>
<div class="a" style="left:539px;top:93px;width:50px;height:4px;background:repeating-linear-gradient(90deg,#a8b0a8 0 1px,#d8d8dc 1px 2px)"></div>
<svg style="left:615px;top:86px" width="18" height="18" viewBox="0 0 18 18"><path d="M4 12 L13 3 L16 6 L7 15 Z" fill="#a0c8f0" stroke="#6090c0" stroke-width="0.8"/><path d="M3 13 L6 16" stroke="#e8c040" stroke-width="2"/><path d="M2 17 L8 17 M10 17 L16 17" stroke="#c8c8d0"/></svg>
<svg style="left:639px;top:92px" width="6" height="4" viewBox="0 0 6 4"><polygon points="0,0 6,0 3,3" fill="#a0a0a8"/></svg>
<div class="a" style="left:648px;top:84px;width:63px;height:20px;border:1px solid;border-color:#b0b0b8 #f4f4f6 #f4f4f6 #b0b0b8;background:#dadade"></div><div class="a" style="left:693px;top:85px;width:17px;height:18px;background:#e4e4e0;border-left:1px solid #f4f4f4"></div><svg style="left:697px;top:89px" width="12" height="12" viewBox="0 0 12 12"><path d="M2 4 L6 8 L10 4" fill="none" stroke="#c0c0bc" stroke-width="1.8"/></svg>

<div class="a" style="left:654px;top:93px;width:36px;height:2px;background:repeating-linear-gradient(90deg,#a0a8a0 0 1px,#dcdce0 1px 2px)"></div>
<svg style="left:727px;top:86px" width="18" height="18" viewBox="0 0 18 18"><path d="M3 7 L9 2 L15 9 L9 15 Z" fill="#e8e0f0" stroke="#a090c0" stroke-width="0.8"/><path d="M5 4 L12 11" stroke="#f0b080" stroke-width="1.5"/><path d="M2 17 L8 17 M10 17 L16 17" stroke="#c8c8d0"/></svg>
<svg style="left:751px;top:92px" width="6" height="4" viewBox="0 0 6 4"><polygon points="0,0 6,0 3,3" fill="#a0a0a8"/></svg>

<!-- palette icons -->
<svg style="left:76px;top:112px" width="40" height="460" viewBox="0 0 40 460">
<defs><linearGradient id="flm" x1="0" y1="0" x2="0" y2="1"><stop offset="0" stop-color="#ffffff"/><stop offset="1" stop-color="#c0d0f0"/></linearGradient>
<linearGradient id="qm" x1="0" y1="0" x2="1" y2="1"><stop offset="0" stop-color="#fff080"/><stop offset="1" stop-color="#d0a000"/></linearGradient>
<linearGradient id="mtn" x1="0" y1="0" x2="0" y2="1"><stop offset="0" stop-color="#f8f040"/><stop offset="1" stop-color="#e0b000"/></linearGradient></defs>
<!-- 1 film -->
<rect x="4.4" y="4.4" width="30.5" height="22.7" fill="url(#flm)" stroke="#1a3a98" stroke-width="1"/>
<rect x="4.4" y="4.4" width="30.5" height="3" fill="#1a3a98"/>
<rect x="4.4" y="24.1" width="30.5" height="3" fill="#1a3a98"/>
<g fill="#fff"><rect x="6" y="5.5" width="1" height="1"/><rect x="9" y="5.5" width="1" height="1"/><rect x="12" y="5.5" width="1" height="1"/><rect x="15" y="5.5" width="1" height="1"/><rect x="18" y="5.5" width="1" height="1"/><rect x="21" y="5.5" width="1" height="1"/><rect x="24" y="5.5" width="1" height="1"/><rect x="27" y="5.5" width="1" height="1"/><rect x="30" y="5.5" width="1" height="1"/><rect x="33" y="5.5" width="1" height="1"/>
<rect x="6" y="25.2" width="1" height="1"/><rect x="9" y="25.2" width="1" height="1"/><rect x="12" y="25.2" width="1" height="1"/><rect x="15" y="25.2" width="1" height="1"/><rect x="18" y="25.2" width="1" height="1"/><rect x="21" y="25.2" width="1" height="1"/><rect x="24" y="25.2" width="1" height="1"/><rect x="27" y="25.2" width="1" height="1"/><rect x="30" y="25.2" width="1" height="1"/><rect x="33" y="25.2" width="1" height="1"/></g>
<line x1="9.5" y1="7" x2="9.5" y2="24" stroke="#6070b0" stroke-width="0.8"/><line x1="27" y1="7" x2="27" y2="24" stroke="#6070b0" stroke-width="0.8"/>
<path d="M22.5 18 Q22.5 13.5 27.5 13.5 Q33 13.5 33 18 Q33 21 29 23 L28.5 27" fill="none" stroke="#b08800" stroke-width="4.6" stroke-linecap="round"/>
<path d="M22.5 18 Q22.5 13.5 27.5 13.5 Q33 13.5 33 18 Q33 21 29 23 L28.5 27" fill="none" stroke="url(#qm)" stroke-width="3" stroke-linecap="round"/>
<rect x="26.5" y="29.5" width="3.5" height="3" fill="#d8b020"/>
<!-- 2 L axis -->
<path d="M8.9 45 V68 H31" fill="none" stroke="#1a3a98" stroke-width="2.8"/>
<polygon points="5.5,47.5 8.9,41.5 12.3,47.5" fill="#1a3a98"/>
<polygon points="28.5,64.5 34,68 28.5,71.5" fill="#1a3a98"/>
<!-- 3 3D axis -->
<path d="M13 82 V100.5 H32 M13 100.5 L6.5 107" fill="none" stroke="#1a3a98" stroke-width="2.8"/>
<polygon points="9.6,84 13,78.5 16.4,84" fill="#1a3a98"/>
<polygon points="30,97 35.5,100.5 30,104" fill="#1a3a98"/>
<polygon points="4.5,103 4.5,109.5 10.5,109.5" fill="#1a3a98"/>
<!-- 4 table grid -->
<rect x="4.5" y="117" width="31.4" height="31.7" fill="#ece8f4" stroke="#1a3a98" stroke-width="1.3"/>
<rect x="5.2" y="117.7" width="30" height="3.6" fill="#f4f4fc"/>
<line x1="4.5" y1="121.6" x2="35.9" y2="121.6" stroke="#1a50b8" stroke-width="1.1"/>
<line x1="4.5" y1="127.8" x2="35.9" y2="127.8" stroke="#1a50b8" stroke-width="1.1"/>
<line x1="4.5" y1="134.6" x2="35.9" y2="134.6" stroke="#1a50b8" stroke-width="1.1"/>
<line x1="4.5" y1="141.6" x2="35.9" y2="141.6" stroke="#1a50b8" stroke-width="1.1"/>
<line x1="10.7" y1="121.6" x2="10.7" y2="148.7" stroke="#1a50b8" stroke-width="1.1"/>
<line x1="17.0" y1="121.6" x2="17.0" y2="148.7" stroke="#1a50b8" stroke-width="1.1"/>
<line x1="23.2" y1="121.6" x2="23.2" y2="148.7" stroke="#1a50b8" stroke-width="1.1"/>
<line x1="29.6" y1="121.6" x2="29.6" y2="148.7" stroke="#1a50b8" stroke-width="1.1"/>
<!-- 5 table 2 -->
<rect x="4.5" y="154.9" width="31.4" height="31.7" fill="#ece8f4" stroke="#1a3a98" stroke-width="1.3"/>
<line x1="8.5" y1="154.9" x2="8.5" y2="186.6" stroke="#1a3a98" stroke-width="1.1"/>
<line x1="8.5" y1="162.3" x2="35.9" y2="162.3" stroke="#1a3a98" stroke-width="1.2"/>
<line x1="8.5" y1="170.8" x2="35.9" y2="170.8" stroke="#1a50b8" stroke-width="1.1"/>
<line x1="8.5" y1="178.7" x2="35.9" y2="178.7" stroke="#1a50b8" stroke-width="1.1"/>
<line x1="17.5" y1="162.3" x2="17.5" y2="186.6" stroke="#1a50b8" stroke-width="1.1"/>
<line x1="26.6" y1="162.3" x2="26.6" y2="186.6" stroke="#1a50b8" stroke-width="1.1"/>
<!-- 6 polar -->
<circle cx="20.3" cy="209.4" r="14.3" fill="#e0e4f8" stroke="#1a3a98" stroke-width="1.4"/>
<circle cx="20.3" cy="209.4" r="6.8" fill="none" stroke="#1a3a98" stroke-width="1"/>
<line x1="6.00" y1="209.40" x2="34.60" y2="209.40" stroke="#1a3a98" stroke-width="0.9"/>
<line x1="7.92" y1="202.25" x2="32.68" y2="216.55" stroke="#1a3a98" stroke-width="0.9"/>
<line x1="13.15" y1="197.02" x2="27.45" y2="221.78" stroke="#1a3a98" stroke-width="0.9"/>
<line x1="20.30" y1="195.10" x2="20.30" y2="223.70" stroke="#1a3a98" stroke-width="0.9"/>
<line x1="27.45" y1="197.02" x2="13.15" y2="221.78" stroke="#1a3a98" stroke-width="0.9"/>
<line x1="32.68" y1="202.25" x2="7.92" y2="216.55" stroke="#1a3a98" stroke-width="0.9"/>
<!-- 7 mountain -->
<rect x="4.5" y="236" width="31" height="22.5" fill="#c8e0f8" stroke="#202428" stroke-width="1.2"/>
<path d="M5 257.5 L14 242 L19 249 L24 241 L35 257.5 Z" fill="url(#mtn)" stroke="#a08000" stroke-width="0.6"/>
<path d="M5 257.5 L10 250 L21 257.5" fill="#f0d020" stroke="#c09000" stroke-width="0.5"/>

<g transform="translate(0,-112)">
<!-- 8 ab -->
<text x="4.5" y="397" font-family="Liberation Sans" font-weight="bold" font-size="12" fill="#b01828" letter-spacing="-0.5">ab</text>
<path d="M22.5 385 L25 387 L27.5 385 M25 387 V398" fill="none" stroke="#3050a0" stroke-width="1"/>
<rect x="19.5" y="395.5" width="15.5" height="14" fill="#fff" stroke="#1a3a98" stroke-width="1.2"/>
<g stroke="#1a3a98" stroke-width="0.9"><line x1="22" y1="398.5" x2="33" y2="398.5"/><line x1="22" y1="400.5" x2="33" y2="400.5"/><line x1="22" y1="402.5" x2="33" y2="402.5"/><line x1="22" y1="404.5" x2="33" y2="404.5"/><line x1="22" y1="406.5" x2="33" y2="406.5"/></g>
<!-- 9 pages -->
<rect x="6" y="421" width="16.5" height="21" fill="#fff" stroke="#1a3a98" stroke-width="1.3"/>
<line x1="9" y1="424.5" x2="19" y2="424.5" stroke="#111" stroke-width="1.5"/><line x1="9" y1="428.5" x2="16" y2="428.5" stroke="#111" stroke-width="1"/><line x1="18" y1="426.5" x2="18" y2="430" stroke="#111" stroke-width="1.3"/>
<rect x="8.5" y="432.5" width="25.5" height="16.5" fill="#fff" stroke="#1a3a98" stroke-width="1.3"/>
<line x1="16" y1="436" x2="26" y2="436" stroke="#111" stroke-width="1.8"/><line x1="31" y1="438" x2="31" y2="446" stroke="#111" stroke-width="1.1"/><line x1="11.5" y1="443" x2="11.5" y2="447" stroke="#111" stroke-width="1.3"/>
<!-- 10 circle rect -->
<circle cx="17" cy="470" r="11.5" fill="none" stroke="#2850a8" stroke-width="2.8"/>
<rect x="15.5" y="473" width="18.5" height="13" fill="#f0e8f4" fill-opacity="0.3" stroke="#b02830" stroke-width="2.6"/>
<!-- 11 lines -->
<line x1="6" y1="501.3" x2="34" y2="501.3" stroke="#1a3a98" stroke-width="2.8"/>
<line x1="6" y1="510.5" x2="30" y2="510.5" stroke="#1a3a98" stroke-width="2.8"/>
<polygon points="28,507 36,510.5 28,514" fill="#1a3a98"/>
<line x1="9" y1="519.3" x2="34" y2="519.3" stroke="#1a3a98" stroke-width="2.8"/>
<circle cx="9.5" cy="519.3" r="3.2" fill="#1a3a98"/>
<!-- 12 script doc -->
<rect x="6.5" y="534" width="27" height="29" fill="#fff" stroke="#707078" stroke-width="0.9"/>
<g stroke-width="1.6"><line x1="9" y1="537" x2="19" y2="537" stroke="#80a030"/><line x1="21" y1="537" x2="25.5" y2="537" stroke="#407040"/>
<line x1="12" y1="540" x2="16.5" y2="540" stroke="#6080a8"/><line x1="16" y1="543" x2="24" y2="543" stroke="#d05040"/><line x1="26" y1="543" x2="30" y2="543" stroke="#80a0b0"/>
<line x1="12" y1="546" x2="16.5" y2="546" stroke="#6080a8"/><line x1="16" y1="549" x2="21" y2="549" stroke="#a09040"/><line x1="20" y1="552" x2="25" y2="552" stroke="#a04030"/><line x1="16" y1="555" x2="21" y2="555" stroke="#a09040"/><line x1="12" y1="558" x2="16.5" y2="558" stroke="#405090"/><line x1="9" y1="561" x2="14" y2="561" stroke="#508040"/></g>
<path d="M20.5 563 Q20 556 26 552 L33 553 Q36 556 35.5 562 Q34 566 28 566 Q22 566 20.5 563 Z" fill="#e8ecf0" stroke="#404448" stroke-width="1.1"/>
<path d="M24 557 Q27 553 31 556" fill="none" stroke="#203060" stroke-width="1"/>
</g>
</svg>

<div id="canvas" class="a"></div>
<div id="page" class="a"></div>

<style>
.yl{left:150px;width:35px;text-align:right;font-size:17px;line-height:20px;color:#6c6c6c;letter-spacing:-0.3px}
.xl{top:855px;width:60px;text-align:center;font-size:17px;line-height:20px;color:#6c6c6c;letter-spacing:-0.3px}
</style>
<svg class="a" style="left:0;top:0" width="1631" height="1028" viewBox="0 0 1631 1028">
<line x1="214.4" y1="334.5" x2="1126.5" y2="334.5" stroke="#485064" stroke-width="1" stroke-dasharray="7.7 6.907"/>
<line x1="214.4" y1="461.5" x2="1126.5" y2="461.5" stroke="#485064" stroke-width="1" stroke-dasharray="7.7 6.907"/>
<line x1="214.4" y1="587.5" x2="1126.5" y2="587.5" stroke="#485064" stroke-width="1" stroke-dasharray="7.7 6.907"/>
<line x1="214.4" y1="714.5" x2="1126.5" y2="714.5" stroke="#485064" stroke-width="1" stroke-dasharray="7.7 6.907"/>
<line x1="434.5" y1="208.8" x2="434.5" y2="840.5" stroke="#485064" stroke-width="1" stroke-dasharray="7.4 7.2"/>
<line x1="665.5" y1="208.8" x2="665.5" y2="840.5" stroke="#485064" stroke-width="1" stroke-dasharray="7.4 7.2"/>
<line x1="895.5" y1="208.8" x2="895.5" y2="840.5" stroke="#485064" stroke-width="1" stroke-dasharray="7.4 7.2"/>
<polyline points="204.5,501.6 250.6,491.5 296.7,472.5 342.8,432.8 388.9,452.5 435.0,423.2 481.1,442.5 527.2,334.8 573.3,393.7 619.4,432.4 665.5,404.2 711.6,314.4 757.7,383.1 803.8,277.2 849.9,402.3 896.0,452.1 942.1,423.2 988.2,462.2 1034.3,393.8 1080.4,482.1 1126.5,452.7" fill="none" stroke="#d45468" stroke-width="1"/>
<polyline points="204.5,727.3 250.6,739.3 296.7,697.9 342.8,666.5 388.9,696.5 435.0,641.2 481.1,683.5 527.2,595.8 573.3,701.2 619.4,552.8 665.5,649.7 711.6,511.9 757.7,545.0 803.8,474.6 849.9,499.3 896.0,436.5 942.1,536.9 988.2,424.2 1034.3,473.6 1080.4,410.9 1126.5,459.3" fill="none" stroke="#5850c0" stroke-width="1"/>
<rect x="204.5" y="208.5" width="922" height="632" fill="none" stroke="#5274a8" stroke-width="4"/>
<line x1="192" y1="208.5" x2="217" y2="208.5" stroke="#5274a8" stroke-width="3.5"/>
<line x1="192" y1="334.9" x2="217" y2="334.9" stroke="#5274a8" stroke-width="3.5"/>
<line x1="192" y1="461.3" x2="217" y2="461.3" stroke="#5274a8" stroke-width="3.5"/>
<line x1="192" y1="587.7" x2="217" y2="587.7" stroke="#5274a8" stroke-width="3.5"/>
<line x1="192" y1="714.1" x2="217" y2="714.1" stroke="#5274a8" stroke-width="3.5"/>
<line x1="192" y1="840.5" x2="217" y2="840.5" stroke="#5274a8" stroke-width="3.5"/>
<line x1="197.5" y1="271.7" x2="210.5" y2="271.7" stroke="#5274a8" stroke-width="3.5" stroke-linecap="round"/>
<line x1="197.5" y1="398.1" x2="210.5" y2="398.1" stroke="#5274a8" stroke-width="3.5" stroke-linecap="round"/>
<line x1="197.5" y1="524.5" x2="210.5" y2="524.5" stroke="#5274a8" stroke-width="3.5" stroke-linecap="round"/>
<line x1="197.5" y1="650.9" x2="210.5" y2="650.9" stroke="#5274a8" stroke-width="3.5" stroke-linecap="round"/>
<line x1="197.5" y1="777.3" x2="210.5" y2="777.3" stroke="#5274a8" stroke-width="3.5" stroke-linecap="round"/>
<line x1="204.5" y1="829" x2="204.5" y2="852" stroke="#5274a8" stroke-width="3.5"/>
<line x1="435.0" y1="829" x2="435.0" y2="852" stroke="#5274a8" stroke-width="3.5"/>
<line x1="665.5" y1="829" x2="665.5" y2="852" stroke="#5274a8" stroke-width="3.5"/>
<line x1="896.0" y1="829" x2="896.0" y2="852" stroke="#5274a8" stroke-width="3.5"/>
<line x1="1126.5" y1="829" x2="1126.5" y2="852" stroke="#5274a8" stroke-width="3.5"/>
<line x1="319.8" y1="834.5" x2="319.8" y2="847.5" stroke="#5274a8" stroke-width="3.5" stroke-linecap="round"/>
<line x1="550.2" y1="834.5" x2="550.2" y2="847.5" stroke="#5274a8" stroke-width="3.5" stroke-linecap="round"/>
<line x1="780.8" y1="834.5" x2="780.8" y2="847.5" stroke="#5274a8" stroke-width="3.5" stroke-linecap="round"/>
<line x1="1011.2" y1="834.5" x2="1011.2" y2="847.5" stroke="#5274a8" stroke-width="3.5" stroke-linecap="round"/>
<rect x="797.5" y="273.5" width="9" height="9" fill="none" stroke="#d02020" stroke-width="1.2"/>
<line x1="830" y1="256" x2="812" y2="270" stroke="#222" stroke-width="1"/>
<polygon points="802,278 808,266 816,273" fill="#000"/>
</svg>
<div class="a yl" style="top:200px">35</div>
<div class="a yl" style="top:326px">30</div>
<div class="a yl" style="top:452px">25</div>
<div class="a yl" style="top:579px">20</div>
<div class="a yl" style="top:705px">15</div>
<div class="a yl" style="top:832px">10</div>
<div class="a xl" style="left:174px">0</div>
<div class="a xl" style="left:405px">5</div>
<div class="a xl" style="left:636px">10</div>
<div class="a xl" style="left:866px">15</div>
<div class="a xl" style="left:1096px">20</div>
<div class="a" style="left:66px;top:275px;width:190px;height:20px;transform:rotate(-90deg);transform-origin:95px 10px;font-size:17px;line-height:20px;color:#707070;text-align:center;white-space:nowrap;letter-spacing:-0.75px">Temperatur_1 [°C]</div>
<div class="a" style="left:1040px;top:867px;width:86px;font-size:17px;line-height:20px;color:#6c6c6c;text-align:right;white-space:nowrap;letter-spacing:-0.4px">Zeit [h]</div>
<div class="a" style="left:830px;top:215px;width:127px;height:42px;background:#ffffe8;border:2px solid #111"></div>
<div class="a" style="left:837px;top:218px;font-size:16px;line-height:18.5px;color:#222;white-space:nowrap">X: 12.97<br>Y: 32.2413</div>

<div id="tabbar" class="a"></div>
<div class="a" style="left:1166px;top:104px;width:6px;height:897px;background:#dfdfe3"></div>
<div class="a" style="left:117px;top:109px;width:1050px;height:1px;background:#ececee"></div>
<div class="a" style="left:1166px;top:109px;width:1.5px;height:891px;background:#fbfbfb"></div>
<div class="a" style="left:1174px;top:115px;font-size:11px;line-height:13px;white-space:nowrap;letter-spacing:0.15px">Datenportal: Interne Daten</div>
<div class="a" style="left:1609px;top:113px;width:13px;height:13px;border:1px solid #f8f8fa;border-right-color:#c8c8d0;border-bottom-color:#c8c8d0"></div>
<svg style="left:1610px;top:115px" width="10" height="10" viewBox="0 0 10 10"><path d="M1.5 1.5 L8.5 8.5 M8.5 1.5 L1.5 8.5" stroke="#505058" stroke-width="2.2"/></svg>

<div class="a" style="left:1171px;top:130px;width:452px;height:412px;border-top:2px solid #808088;border-left:1px solid #808088;border-right:1px solid #f8f8f8"></div>
<div class="a" style="left:1262px;top:134px;width:270px;height:10px;border:1px solid #a0a0a8;background:linear-gradient(90deg,#d8d8dc,#f4f4f6 50%,#d8d8dc)"></div>
<svg style="left:1393px;top:135px" width="8" height="8" viewBox="0 0 8 8"><path d="M1.5 4 L4 1.5 L6.5 4 M1.5 7 L4 4.5 L6.5 7" fill="none" stroke="#808088" stroke-width="0.9"/></svg>

<svg style="left:1176px;top:148px" width="16" height="16" viewBox="0 0 16 16"><path d="M0.5 14 V0.5 H3.0" fill="none" stroke="#4a70c0" stroke-width="1"/><rect x="2.0" y="2.5" width="1" height="1" fill="#7898d8"/><rect x="2.0" y="4.5" width="1" height="1" fill="#7898d8"/><rect x="2.0" y="6.5" width="1" height="1" fill="#7898d8"/><rect x="2.0" y="8.5" width="1" height="1" fill="#7898d8"/><rect x="2.0" y="10.5" width="1" height="1" fill="#7898d8"/><rect x="2.0" y="12.5" width="1" height="1" fill="#7898d8"/><path d="M4.3 14 V3.5 H6.8" fill="none" stroke="#4a70c0" stroke-width="1"/><rect x="5.8" y="5.5" width="1" height="1" fill="#7898d8"/><rect x="5.8" y="7.5" width="1" height="1" fill="#7898d8"/><rect x="5.8" y="9.5" width="1" height="1" fill="#7898d8"/><rect x="5.8" y="11.5" width="1" height="1" fill="#7898d8"/><rect x="5.8" y="13.5" width="1" height="1" fill="#7898d8"/><path d="M8.1 14 V7.0 H10.6" fill="none" stroke="#4a70c0" stroke-width="1"/><rect x="9.6" y="9.0" width="1" height="1" fill="#7898d8"/><rect x="9.6" y="11.0" width="1" height="1" fill="#7898d8"/><rect x="9.6" y="13.0" width="1" height="1" fill="#7898d8"/><path d="M11.9 14 V9.5 H14.4" fill="none" stroke="#4a70c0" stroke-width="1"/><rect x="13.4" y="11.5" width="1" height="1" fill="#7898d8"/><rect x="13.4" y="13.5" width="1" height="1" fill="#7898d8"/><line x1="0" y1="14.5" x2="14" y2="14.5" stroke="#111" stroke-width="1.2"/></svg>

<svg style="left:1176px;top:167px" width="15" height="15" viewBox="0 0 15 15"><path d="M1.5 12 V1.5 H3" fill="none" stroke="#4068b8"/><path d="M2.5 10 Q5 2 7 6 Q9 10 13 6" fill="none" stroke="#333" stroke-width="1.1"/><line x1="0" y1="13.5" x2="14" y2="13.5" stroke="#111" stroke-width="1.2"/></svg>

<div class="a" style="left:1195px;top:146px;width:425px;height:18px;background:#fff;border-top:1px solid #c8c8d0;border-left:1px solid #d0d0d8"></div>
<div class="a" style="left:1198px;top:148px;font-size:11px;line-height:13px;white-space:nowrap;letter-spacing:-0.1px">&lt;Geben Sie einen Gruppenfilter ein&gt;</div>
<div class="a" style="left:1195px;top:167px;width:425px;height:18px;background:#fff;border-top:1px solid #c8c8d0;border-left:1px solid #d0d0d8"></div>
<div class="a" style="left:1198px;top:169px;font-size:11px;line-height:13px;white-space:nowrap;letter-spacing:-0.1px">&lt;Geben Sie einen Kanalfilter ein&gt;</div>
<div class="a" style="left:1172px;top:190px;width:450px;height:331px;background:#fff;border-top:1px solid #a0a0a8"></div>
<div class="a" style="left:1322px;top:191px;width:1px;height:330px;background:#a8a8b0"></div>
<div class="a" style="left:1607px;top:191px;width:15px;height:330px;background:linear-gradient(90deg,#f4f4f8,#e8e8f0);border-left:1px solid #f0f0f4"></div>
<div class="a" style="left:1607px;top:192px;width:15px;height:15px;border:1px solid #909098;border-radius:2px;background:linear-gradient(#fff,#d8d8e4)"></div>
<svg style="left:1609px;top:196px" width="11" height="9" viewBox="0 0 11 9"><path d="M1.5 6.5 L5.5 2.5 L9.5 6.5" fill="none" stroke="#202028" stroke-width="2"/></svg>

<div class="a" style="left:1607px;top:209px;width:15px;height:256px;border:1px solid #909098;border-radius:2px;background:linear-gradient(90deg,#f8f8fc,#c8c8d8)"></div>
<svg style="left:1610px;top:332px" width="10" height="9" viewBox="0 0 10 9"><path d="M1 1.5 H9 M1 3.5 H9 M1 5.5 H9 M1 7.5 H9" stroke="#a0a0b0" stroke-width="0.8"/></svg>

<div class="a" style="left:1607px;top:504px;width:15px;height:16px;border:1px solid #909098;border-radius:2px;background:linear-gradient(#fff,#d0d0dc)"></div>
<svg style="left:1609px;top:508px" width="11" height="9" viewBox="0 0 11 9"><path d="M1.5 2.5 L5.5 6.5 L9.5 2.5" fill="none" stroke="#202028" stroke-width="2"/></svg>

<svg style="left:1172px;top:191px" width="150" height="330" viewBox="0 0 150 330"><line x1="8.5" y1="16" x2="8.5" y2="313" stroke="#a0a0a8" stroke-width="1" stroke-dasharray="1 1"/><line x1="13" y1="23.5" x2="19" y2="23.5" stroke="#a0a0a8" stroke-width="1" stroke-dasharray="1 1"/><line x1="28.5" y1="31" x2="28.5" y2="87" stroke="#a0a0a8" stroke-width="1" stroke-dasharray="1 1"/><line x1="29" y1="39.5" x2="40" y2="39.5" stroke="#a0a0a8" stroke-width="1" stroke-dasharray="1 1"/><line x1="29" y1="55.5" x2="40" y2="55.5" stroke="#a0a0a8" stroke-width="1" stroke-dasharray="1 1"/><line x1="29" y1="71.5" x2="40" y2="71.5" stroke="#a0a0a8" stroke-width="1" stroke-dasharray="1 1"/><line x1="29" y1="87.5" x2="40" y2="87.5" stroke="#a0a0a8" stroke-width="1" stroke-dasharray="1 1"/><rect x="4.5" y="19.5" width="8" height="8" rx="1.5" fill="#f4f4f4" stroke="#8c8c94"/><line x1="6.5" y1="23.5" x2="10.5" y2="23.5" stroke="#111" stroke-width="1.2"/><line x1="13" y1="103.5" x2="19" y2="103.5" stroke="#a0a0a8" stroke-width="1" stroke-dasharray="1 1"/><line x1="28.5" y1="111" x2="28.5" y2="183" stroke="#a0a0a8" stroke-width="1" stroke-dasharray="1 1"/><line x1="29" y1="119.5" x2="40" y2="119.5" stroke="#a0a0a8" stroke-width="1" stroke-dasharray="1 1"/><line x1="29" y1="135.5" x2="40" y2="135.5" stroke="#a0a0a8" stroke-width="1" stroke-dasharray="1 1"/><line x1="29" y1="151.5" x2="40" y2="151.5" stroke="#a0a0a8" stroke-width="1" stroke-dasharray="1 1"/><line x1="29" y1="167.5" x2="40" y2="167.5" stroke="#a0a0a8" stroke-width="1" stroke-dasharray="1 1"/><line x1="29" y1="183.5" x2="40" y2="183.5" stroke="#a0a0a8" stroke-width="1" stroke-dasharray="1 1"/><rect x="4.5" y="99.5" width="8" height="8" rx="1.5" fill="#f4f4f4" stroke="#8c8c94"/><line x1="6.5" y1="103.5" x2="10.5" y2="103.5" stroke="#111" stroke-width="1.2"/><line x1="13" y1="199.5" x2="19" y2="199.5" stroke="#a0a0a8" stroke-width="1" stroke-dasharray="1 1"/><line x1="28.5" y1="207" x2="28.5" y2="295" stroke="#a0a0a8" stroke-width="1" stroke-dasharray="1 1"/><line x1="29" y1="215.5" x2="40" y2="215.5" stroke="#a0a0a8" stroke-width="1" stroke-dasharray="1 1"/><line x1="29" y1="231.5" x2="40" y2="231.5" stroke="#a0a0a8" stroke-width="1" stroke-dasharray="1 1"/><line x1="29" y1="247.5" x2="40" y2="247.5" stroke="#a0a0a8" stroke-width="1" stroke-dasharray="1 1"/><line x1="29" y1="263.5" x2="40" y2="263.5" stroke="#a0a0a8" stroke-width="1" stroke-dasharray="1 1"/><line x1="29" y1="279.5" x2="40" y2="279.5" stroke="#a0a0a8" stroke-width="1" stroke-dasharray="1 1"/><line x1="29" y1="295.5" x2="40" y2="295.5" stroke="#a0a0a8" stroke-width="1" stroke-dasharray="1 1"/><rect x="4.5" y="195.5" width="8" height="8" rx="1.5" fill="#f4f4f4" stroke="#8c8c94"/><line x1="6.5" y1="199.5" x2="10.5" y2="199.5" stroke="#111" stroke-width="1.2"/><line x1="13" y1="311.5" x2="19" y2="311.5" stroke="#a0a0a8" stroke-width="1" stroke-dasharray="1 1"/><line x1="28.5" y1="319" x2="28.5" y2="327" stroke="#a0a0a8" stroke-width="1" stroke-dasharray="1 1"/><line x1="29" y1="327.5" x2="40" y2="327.5" stroke="#a0a0a8" stroke-width="1" stroke-dasharray="1 1"/><rect x="4.5" y="307.5" width="8" height="8" rx="1.5" fill="#f4f4f4" stroke="#8c8c94"/><line x1="6.5" y1="311.5" x2="10.5" y2="311.5" stroke="#111" stroke-width="1.2"/></svg>
<svg style="left:1174px;top:191px" width="12" height="15" viewBox="0 0 12 15"><rect x="0.5" y="0.5" width="11" height="13" rx="3" fill="#a0c0e8" stroke="#6088c0"/><path d="M2 4 Q6 6 10 4 M2 8 Q6 10 10 8" fill="none" stroke="#e8f0fc" stroke-width="1"/><line x1="4" y1="2" x2="4" y2="12" stroke="#d0e0f8" stroke-width="1"/></svg>

<div class="a" style="left:1193px;top:194px;font-size:11px;line-height:13px;white-space:nowrap;">EXAMPLE</div>
<svg style="left:1192px;top:207.5px" width="16" height="15" viewBox="0 0 16 15"><path d="M0.5 14 V0.5 H3.0" fill="none" stroke="#4a70c0" stroke-width="1"/><rect x="2.0" y="2.5" width="1" height="1" fill="#7898d8"/><rect x="2.0" y="4.5" width="1" height="1" fill="#7898d8"/><rect x="2.0" y="6.5" width="1" height="1" fill="#7898d8"/><rect x="2.0" y="8.5" width="1" height="1" fill="#7898d8"/><rect x="2.0" y="10.5" width="1" height="1" fill="#7898d8"/><rect x="2.0" y="12.5" width="1" height="1" fill="#7898d8"/><path d="M4.3 14 V3.5 H6.8" fill="none" stroke="#4a70c0" stroke-width="1"/><rect x="5.8" y="5.5" width="1" height="1" fill="#7898d8"/><rect x="5.8" y="7.5" width="1" height="1" fill="#7898d8"/><rect x="5.8" y="9.5" width="1" height="1" fill="#7898d8"/><rect x="5.8" y="11.5" width="1" height="1" fill="#7898d8"/><rect x="5.8" y="13.5" width="1" height="1" fill="#7898d8"/><path d="M8.1 14 V7.0 H10.6" fill="none" stroke="#4a70c0" stroke-width="1"/><rect x="9.6" y="9.0" width="1" height="1" fill="#7898d8"/><rect x="9.6" y="11.0" width="1" height="1" fill="#7898d8"/><rect x="9.6" y="13.0" width="1" height="1" fill="#7898d8"/><path d="M11.9 14 V9.5 H14.4" fill="none" stroke="#4a70c0" stroke-width="1"/><rect x="13.4" y="11.5" width="1" height="1" fill="#7898d8"/><rect x="13.4" y="13.5" width="1" height="1" fill="#7898d8"/></svg>

<div class="a" style="left:1213px;top:210px;font-size:11px;line-height:13px;white-space:nowrap;">EXAMPLE</div>
<svg style="left:1212px;top:223.5px" width="16" height="15" viewBox="0 0 16 15"><path d="M1.5 13 V1.5 H3" fill="none" stroke="#4068b8" stroke-width="1"/><g fill="#90b0e0"><rect x="2.5" y="4" width="1" height="1"/><rect x="2.5" y="7" width="1" height="1"/><rect x="2.5" y="10" width="1" height="1"/></g><text x="4" y="7.5" font-family="Liberation Sans" font-size="8" fill="#222" letter-spacing="-0.6">123</text></svg>

<div class="a" style="left:1233px;top:226px;font-size:11px;line-height:13px;white-space:nowrap;">Zeit</div>
<svg style="left:1212px;top:239.5px" width="16" height="15" viewBox="0 0 16 15"><path d="M1.5 13 V1.5 H3" fill="none" stroke="#4068b8" stroke-width="1"/><g fill="#90b0e0"><rect x="2.5" y="4" width="1" height="1"/><rect x="2.5" y="7" width="1" height="1"/><rect x="2.5" y="10" width="1" height="1"/></g><text x="4" y="7.5" font-family="Liberation Sans" font-size="8" fill="#222" letter-spacing="-0.6">123</text></svg>

<div class="a" style="left:1233px;top:242px;font-size:11px;line-height:13px;white-space:nowrap;">Geschwindigkeit</div>
<svg style="left:1212px;top:255.5px" width="16" height="15" viewBox="0 0 16 15"><path d="M1.5 13 V1.5 H3" fill="none" stroke="#4068b8" stroke-width="1"/><g fill="#90b0e0"><rect x="2.5" y="4" width="1" height="1"/><rect x="2.5" y="7" width="1" height="1"/><rect x="2.5" y="10" width="1" height="1"/></g><text x="4" y="7.5" font-family="Liberation Sans" font-size="8" fill="#222" letter-spacing="-0.6">123</text></svg>

<div class="a" style="left:1233px;top:258px;font-size:11px;line-height:13px;white-space:nowrap;">Drehzahl</div>
<svg style="left:1212px;top:271.5px" width="16" height="15" viewBox="0 0 16 15"><path d="M1.5 13 V1.5 H3" fill="none" stroke="#4068b8" stroke-width="1"/><g fill="#90b0e0"><rect x="2.5" y="4" width="1" height="1"/><rect x="2.5" y="7" width="1" height="1"/><rect x="2.5" y="10" width="1" height="1"/></g><text x="4" y="7.5" font-family="Liberation Sans" font-size="8" fill="#222" letter-spacing="-0.6">123</text></svg>

<div class="a" style="left:1233px;top:274px;font-size:11px;line-height:13px;white-space:nowrap;">Drehmoment</div>
<svg style="left:1192px;top:287.5px" width="16" height="15" viewBox="0 0 16 15"><path d="M0.5 14 V0.5 H3.0" fill="none" stroke="#4a70c0" stroke-width="1"/><rect x="2.0" y="2.5" width="1" height="1" fill="#7898d8"/><rect x="2.0" y="4.5" width="1" height="1" fill="#7898d8"/><rect x="2.0" y="6.5" width="1" height="1" fill="#7898d8"/><rect x="2.0" y="8.5" width="1" height="1" fill="#7898d8"/><rect x="2.0" y="10.5" width="1" height="1" fill="#7898d8"/><rect x="2.0" y="12.5" width="1" height="1" fill="#7898d8"/><path d="M4.3 14 V3.5 H6.8" fill="none" stroke="#4a70c0" stroke-width="1"/><rect x="5.8" y="5.5" width="1" height="1" fill="#7898d8"/><rect x="5.8" y="7.5" width="1" height="1" fill="#7898d8"/><rect x="5.8" y="9.5" width="1" height="1" fill="#7898d8"/><rect x="5.8" y="11.5" width="1" height="1" fill="#7898d8"/><rect x="5.8" y="13.5" width="1" height="1" fill="#7898d8"/><path d="M8.1 14 V7.0 H10.6" fill="none" stroke="#4a70c0" stroke-width="1"/><rect x="9.6" y="9.0" width="1" height="1" fill="#7898d8"/><rect x="9.6" y="11.0" width="1" height="1" fill="#7898d8"/><rect x="9.6" y="13.0" width="1" height="1" fill="#7898d8"/><path d="M11.9 14 V9.5 H14.4" fill="none" stroke="#4a70c0" stroke-width="1"/><rect x="13.4" y="11.5" width="1" height="1" fill="#7898d8"/><rect x="13.4" y="13.5" width="1" height="1" fill="#7898d8"/></svg>

<div class="a" style="left:1213px;top:290px;font-size:11px;line-height:13px;white-space:nowrap;">Schalldaten</div>
<svg style="left:1212px;top:303.5px" width="16" height="15" viewBox="0 0 16 15"><path d="M1.5 13 V1.5 H3" fill="none" stroke="#4068b8" stroke-width="1"/><g fill="#90b0e0"><rect x="2.5" y="4" width="1" height="1"/><rect x="2.5" y="7" width="1" height="1"/><rect x="2.5" y="10" width="1" height="1"/></g><path d="M3 9 L6.5 2.5 L10 8 L14 3" fill="none" stroke="#555" stroke-width="1.1"/></svg>

<div class="a" style="left:1233px;top:306px;font-size:11px;line-height:13px;white-space:nowrap;">Schall_1</div>
<svg style="left:1212px;top:319.5px" width="16" height="15" viewBox="0 0 16 15"><path d="M1.5 13 V1.5 H3" fill="none" stroke="#4068b8" stroke-width="1"/><g fill="#90b0e0"><rect x="2.5" y="4" width="1" height="1"/><rect x="2.5" y="7" width="1" height="1"/><rect x="2.5" y="10" width="1" height="1"/></g><path d="M3 9 L6.5 2.5 L10 8 L14 3" fill="none" stroke="#555" stroke-width="1.1"/></svg>

<div class="a" style="left:1233px;top:322px;font-size:11px;line-height:13px;white-space:nowrap;">Schall_2</div>
<svg style="left:1212px;top:335.5px" width="16" height="15" viewBox="0 0 16 15"><path d="M1.5 13 V1.5 H3" fill="none" stroke="#4068b8" stroke-width="1"/><g fill="#90b0e0"><rect x="2.5" y="4" width="1" height="1"/><rect x="2.5" y="7" width="1" height="1"/><rect x="2.5" y="10" width="1" height="1"/></g><path d="M3 9 L6.5 2.5 L10 8 L14 3" fill="none" stroke="#555" stroke-width="1.1"/></svg>

<div class="a" style="left:1233px;top:338px;font-size:11px;line-height:13px;white-space:nowrap;">Schall_3</div>
<svg style="left:1212px;top:351.5px" width="16" height="15" viewBox="0 0 16 15"><path d="M1.5 13 V1.5 H3" fill="none" stroke="#4068b8" stroke-width="1"/><g fill="#90b0e0"><rect x="2.5" y="4" width="1" height="1"/><rect x="2.5" y="7" width="1" height="1"/><rect x="2.5" y="10" width="1" height="1"/></g><path d="M3 9 L6.5 2.5 L10 8 L14 3" fill="none" stroke="#555" stroke-width="1.1"/></svg>

<div class="a" style="left:1233px;top:354px;font-size:11px;line-height:13px;white-space:nowrap;">Schall_4</div>
<svg style="left:1212px;top:367.5px" width="16" height="15" viewBox="0 0 16 15"><path d="M1.5 13 V1.5 H3" fill="none" stroke="#4068b8" stroke-width="1"/><g fill="#90b0e0"><rect x="2.5" y="4" width="1" height="1"/><rect x="2.5" y="7" width="1" height="1"/><rect x="2.5" y="10" width="1" height="1"/></g><path d="M3 9 L6.5 2.5 L10 8 L14 3" fill="none" stroke="#555" stroke-width="1.1"/></svg>

<div class="a" style="left:1233px;top:370px;font-size:11px;line-height:13px;white-space:nowrap;">Schall_5</div>
<svg style="left:1192px;top:383.5px" width="16" height="15" viewBox="0 0 16 15"><path d="M0.5 14 V0.5 H3.0" fill="none" stroke="#4a70c0" stroke-width="1"/><rect x="2.0" y="2.5" width="1" height="1" fill="#7898d8"/><rect x="2.0" y="4.5" width="1" height="1" fill="#7898d8"/><rect x="2.0" y="6.5" width="1" height="1" fill="#7898d8"/><rect x="2.0" y="8.5" width="1" height="1" fill="#7898d8"/><rect x="2.0" y="10.5" width="1" height="1" fill="#7898d8"/><rect x="2.0" y="12.5" width="1" height="1" fill="#7898d8"/><path d="M4.3 14 V3.5 H6.8" fill="none" stroke="#4a70c0" stroke-width="1"/><rect x="5.8" y="5.5" width="1" height="1" fill="#7898d8"/><rect x="5.8" y="7.5" width="1" height="1" fill="#7898d8"/><rect x="5.8" y="9.5" width="1" height="1" fill="#7898d8"/><rect x="5.8" y="11.5" width="1" height="1" fill="#7898d8"/><rect x="5.8" y="13.5" width="1" height="1" fill="#7898d8"/><path d="M8.1 14 V7.0 H10.6" fill="none" stroke="#4a70c0" stroke-width="1"/><rect x="9.6" y="9.0" width="1" height="1" fill="#7898d8"/><rect x="9.6" y="11.0" width="1" height="1" fill="#7898d8"/><rect x="9.6" y="13.0" width="1" height="1" fill="#7898d8"/><path d="M11.9 14 V9.5 H14.4" fill="none" stroke="#4a70c0" stroke-width="1"/><rect x="13.4" y="11.5" width="1" height="1" fill="#7898d8"/><rect x="13.4" y="13.5" width="1" height="1" fill="#7898d8"/></svg>

<div class="a" style="left:1213px;top:386px;font-size:11px;line-height:13px;white-space:nowrap;">Ergebnisse_Schalld...</div>
<svg style="left:1212px;top:399.5px" width="16" height="15" viewBox="0 0 16 15"><path d="M1.5 13 V1.5 H3" fill="none" stroke="#4068b8" stroke-width="1"/><g fill="#90b0e0"><rect x="2.5" y="4" width="1" height="1"/><rect x="2.5" y="7" width="1" height="1"/><rect x="2.5" y="10" width="1" height="1"/></g><text x="4" y="7.5" font-family="Liberation Sans" font-size="8" fill="#222" letter-spacing="-0.6">Txt</text></svg>

<div class="a" style="left:1233px;top:402px;font-size:11px;line-height:13px;white-space:nowrap;">Statistiktext</div>
<svg style="left:1212px;top:415.5px" width="16" height="15" viewBox="0 0 16 15"><path d="M1.5 13 V1.5 H3" fill="none" stroke="#4068b8" stroke-width="1"/><g fill="#90b0e0"><rect x="2.5" y="4" width="1" height="1"/><rect x="2.5" y="7" width="1" height="1"/><rect x="2.5" y="10" width="1" height="1"/></g><text x="4" y="7.5" font-family="Liberation Sans" font-size="8" fill="#222" letter-spacing="-0.6">123</text></svg>

<div class="a" style="left:1233px;top:418px;font-size:11px;line-height:13px;white-space:nowrap;">Res_Schall_1</div>
<svg style="left:1212px;top:431.5px" width="16" height="15" viewBox="0 0 16 15"><path d="M1.5 13 V1.5 H3" fill="none" stroke="#4068b8" stroke-width="1"/><g fill="#90b0e0"><rect x="2.5" y="4" width="1" height="1"/><rect x="2.5" y="7" width="1" height="1"/><rect x="2.5" y="10" width="1" height="1"/></g><text x="4" y="7.5" font-family="Liberation Sans" font-size="8" fill="#222" letter-spacing="-0.6">123</text></svg>

<div class="a" style="left:1233px;top:434px;font-size:11px;line-height:13px;white-space:nowrap;">Res_Schall_2</div>
<svg style="left:1212px;top:447.5px" width="16" height="15" viewBox="0 0 16 15"><path d="M1.5 13 V1.5 H3" fill="none" stroke="#4068b8" stroke-width="1"/><g fill="#90b0e0"><rect x="2.5" y="4" width="1" height="1"/><rect x="2.5" y="7" width="1" height="1"/><rect x="2.5" y="10" width="1" height="1"/></g><text x="4" y="7.5" font-family="Liberation Sans" font-size="8" fill="#222" letter-spacing="-0.6">123</text></svg>

<div class="a" style="left:1233px;top:450px;font-size:11px;line-height:13px;white-space:nowrap;">Res_Schall_3</div>
<svg style="left:1212px;top:463.5px" width="16" height="15" viewBox="0 0 16 15"><path d="M1.5 13 V1.5 H3" fill="none" stroke="#4068b8" stroke-width="1"/><g fill="#90b0e0"><rect x="2.5" y="4" width="1" height="1"/><rect x="2.5" y="7" width="1" height="1"/><rect x="2.5" y="10" width="1" height="1"/></g><text x="4" y="7.5" font-family="Liberation Sans" font-size="8" fill="#222" letter-spacing="-0.6">123</text></svg>

<div class="a" style="left:1233px;top:466px;font-size:11px;line-height:13px;white-space:nowrap;">Res_Schall_4</div>
<svg style="left:1212px;top:479.5px" width="16" height="15" viewBox="0 0 16 15"><path d="M1.5 13 V1.5 H3" fill="none" stroke="#4068b8" stroke-width="1"/><g fill="#90b0e0"><rect x="2.5" y="4" width="1" height="1"/><rect x="2.5" y="7" width="1" height="1"/><rect x="2.5" y="10" width="1" height="1"/></g><text x="4" y="7.5" font-family="Liberation Sans" font-size="8" fill="#222" letter-spacing="-0.6">123</text></svg>

<div class="a" style="left:1233px;top:482px;font-size:11px;line-height:13px;white-space:nowrap;">Res_Schall_5</div>
<svg style="left:1192px;top:495.5px" width="16" height="15" viewBox="0 0 16 15"><path d="M0.5 14 V0.5 H3.0" fill="none" stroke="#4a70c0" stroke-width="1"/><rect x="2.0" y="2.5" width="1" height="1" fill="#7898d8"/><rect x="2.0" y="4.5" width="1" height="1" fill="#7898d8"/><rect x="2.0" y="6.5" width="1" height="1" fill="#7898d8"/><rect x="2.0" y="8.5" width="1" height="1" fill="#7898d8"/><rect x="2.0" y="10.5" width="1" height="1" fill="#7898d8"/><rect x="2.0" y="12.5" width="1" height="1" fill="#7898d8"/><path d="M4.3 14 V3.5 H6.8" fill="none" stroke="#4a70c0" stroke-width="1"/><rect x="5.8" y="5.5" width="1" height="1" fill="#7898d8"/><rect x="5.8" y="7.5" width="1" height="1" fill="#7898d8"/><rect x="5.8" y="9.5" width="1" height="1" fill="#7898d8"/><rect x="5.8" y="11.5" width="1" height="1" fill="#7898d8"/><rect x="5.8" y="13.5" width="1" height="1" fill="#7898d8"/><path d="M8.1 14 V7.0 H10.6" fill="none" stroke="#4a70c0" stroke-width="1"/><rect x="9.6" y="9.0" width="1" height="1" fill="#7898d8"/><rect x="9.6" y="11.0" width="1" height="1" fill="#7898d8"/><rect x="9.6" y="13.0" width="1" height="1" fill="#7898d8"/><path d="M11.9 14 V9.5 H14.4" fill="none" stroke="#4a70c0" stroke-width="1"/><rect x="13.4" y="11.5" width="1" height="1" fill="#7898d8"/><rect x="13.4" y="13.5" width="1" height="1" fill="#7898d8"/></svg>

<div class="a" style="left:1213px;top:498px;font-size:11px;line-height:13px;white-space:nowrap;font-weight:bold;letter-spacing:0.75px">Raumtemperatu...</div>
<svg style="left:1212px;top:511.5px" width="16" height="15" viewBox="0 0 16 15"><path d="M1.5 13 V1.5 H3" fill="none" stroke="#4068b8" stroke-width="1"/><g fill="#90b0e0"><rect x="2.5" y="4" width="1" height="1"/><rect x="2.5" y="7" width="1" height="1"/><rect x="2.5" y="10" width="1" height="1"/></g><path d="M3 9 L6.5 2.5 L10 8 L14 3" fill="none" stroke="#555" stroke-width="1.1"/></svg>

<div class="a" style="left:1233px;top:514px;width:80px;height:7px;overflow:hidden;font-size:11px;line-height:13px;white-space:nowrap">Temperatur_1</div>
<div class="a" style="left:1172px;top:521px;width:450px;height:17px;background:#dfdfe3"></div>
<div class="a" style="left:1231px;top:521px;width:391px;height:1px;background:#000"></div>
<svg style="left:1170px;top:521px" width="100" height="18" viewBox="0 0 100 18"><polygon points="2,0 61.5,0 55.5,16.5 8,16.5" fill="#fff"/><path d="M2 0 L8 16.5 H55.5 L61.5 0" fill="none" stroke="#111" stroke-width="1"/><path d="M61.5 0 L56 16.5 H92.5 L97 0" fill="none" stroke="#111" stroke-width="1"/></svg>

<div class="a" style="left:1180px;top:524px;font-size:11px;line-height:13px">Struktur</div>
<div class="a" style="left:1234px;top:524px;font-size:11px;line-height:13px">Liste</div>
<div class="a" style="left:1172px;top:539px;width:452px;height:1px;background:#f8f8fa"></div>
<div class="a" style="left:1171px;top:543px;width:453px;height:344px;border-top:1px solid #a8a8b0;border-left:1px solid #a8a8b0;border-right:1px solid #f8f8f8"></div>
<div class="a" style="left:1247px;top:559px;width:300px;text-align:center;font-size:11px;line-height:13px;white-space:nowrap">Anzeige von Eigenschaften<br>der in Struktur- oder Listenansicht<br>ausgewählten Objekte.<br>&nbsp;<br>Sind mehrere Objekte<br>ausgewählt, so werden die<br>gemeinsamen Eigenschaften<br>angezeigt.</div>
<div class="a" style="left:1172px;top:888px;width:452px;height:1px;background:#c0c0c8"></div>
<div class="a" style="left:1262px;top:889px;width:270px;height:1px;background:repeating-linear-gradient(90deg,#808088 0 1px,transparent 1px 3px)"></div>
<svg style="left:1263px;top:886px" width="10" height="7" viewBox="0 0 10 7"><polygon points="1,1 9,1 5,5" fill="#606068"/><line x1="0.5" y1="0" x2="0.5" y2="6" stroke="#909098"/></svg>

<svg style="left:1520px;top:886px" width="12" height="7" viewBox="0 0 12 7"><polygon points="1,1 9,1 5,5" fill="#606068"/><line x1="11.5" y1="0" x2="11.5" y2="6" stroke="#909098"/></svg>

<div class="a" style="left:1171px;top:890px;width:453px;height:108px;border-top:1px solid #a8a8b0;border-left:1px solid #a8a8b0;border-right:1px solid #f8f8f8;border-bottom:1px solid #f8f8f8"></div>
<div class="a" style="left:1171px;top:893px;width:453px;text-align:center;font-size:11px;line-height:13px;white-space:nowrap;letter-spacing:-0.1px">Kanalvorschau<br>Selektieren Sie einen Kanal in der Struktur oder in der Liste.</div>
<div class="a" style="left:1624px;top:104px;width:3px;height:897px;background:#e8e8ec;border-left:1px solid #f8f8f8"></div>
<div id="status" class="a"></div>
<div id="taskbar" class="a"></div>
<div class="a" style="left:117px;top:983px;width:18px;height:16px;background:linear-gradient(#f0f0f2,#d8d8dc);border-right:1px solid #000;border-left:1px solid #fff;border-bottom:1px solid #a0a0a4"></div>
<div class="a" style="left:135px;top:983px;width:18px;height:16px;background:linear-gradient(#f0f0f2,#d8d8dc);border-right:1px solid #000;border-left:1px solid #fff;border-bottom:1px solid #a0a0a4"></div>
<div class="a" style="left:153px;top:983px;width:18px;height:16px;background:linear-gradient(#f0f0f2,#d8d8dc);border-right:1px solid #000;border-left:1px solid #fff;border-bottom:1px solid #a0a0a4"></div>
<div class="a" style="left:171px;top:983px;width:18px;height:16px;background:linear-gradient(#f0f0f2,#d8d8dc);border-right:1px solid #000;border-left:1px solid #fff;border-bottom:1px solid #a0a0a4"></div>
<svg style="left:122px;top:986px" width="10" height="11" viewBox="0 0 10 11"><rect x="0" y="1" width="1.5" height="9" fill="#a0a0a4"/><polygon points="7,1 2,5.5 7,10" fill="#a0a0a4"/></svg>

<svg style="left:141px;top:986px" width="10" height="11" viewBox="0 0 10 11"><polygon points="6,1 1,5.5 6,10" fill="#a0a0a4"/></svg>

<svg style="left:159px;top:986px" width="10" height="11" viewBox="0 0 10 11"><polygon points="1,1 6,5.5 1,10" fill="#a0a0a4"/></svg>

<svg style="left:176px;top:986px" width="10" height="11" viewBox="0 0 10 11"><polygon points="1,1 6,5.5 1,10" fill="#a0a0a4"/><rect x="6.5" y="1" width="1.5" height="9" fill="#a0a0a4"/></svg>

<svg style="left:189px;top:982px" width="60" height="18" viewBox="0 0 60 18"><polygon points="1,0 52,0 47,16.5 7,16.5" fill="#fff"/><path d="M1 0 L7 16.5 H47 L52.5 0" fill="none" stroke="#111" stroke-width="1"/></svg>

<div class="a" style="left:198px;top:985px;font-size:11px;line-height:13px;white-space:nowrap;letter-spacing:-0.2px">Blatt 1</div>
<div class="a" style="left:117px;top:999px;width:1050px;height:1px;background:#f8f8fa"></div>
<div class="a" style="left:2px;top:1013px;width:4px;height:1.5px;background:#000"></div>
<div class="a" style="left:1218px;top:1002px;width:1px;height:22px;background:#b0b0b8;box-shadow:1px 0 0 #fff"></div>
<div class="a" style="left:1278px;top:1002px;width:1px;height:22px;background:#b0b0b8;box-shadow:1px 0 0 #fff"></div>
<div class="a" style="left:1626px;top:1001px;width:2px;height:23px;background:#fafaf8"></div>
<div class="a" style="left:0;top:1024px;width:96px;height:4px;background:linear-gradient(#308030,#70d070 1px,#90e090);border-top-right-radius:3px"></div>
<div class="a" style="left:96px;top:1024px;width:1535px;height:1px;background:#8c8ca0"></div>
<div class="a" style="left:1336px;top:1025px;width:295px;height:3px;background:#fff"></div><div class="a" style="left:703px;top:541px;width:479px;height:15px;background:#ffffe1;border:1px solid #000"></div>
<div class="a" style="left:706px;top:542px;font-size:11px;line-height:13px;white-space:nowrap;letter-spacing:-0.02px">2D-Achsensystem "2D-Axis1" / Kurve 3 "2D-Axis1_Curve3"&nbsp; vom Typ Line(x=&nbsp;&nbsp;&nbsp; ,y=Temperatur_3)</div>

</body></html>
